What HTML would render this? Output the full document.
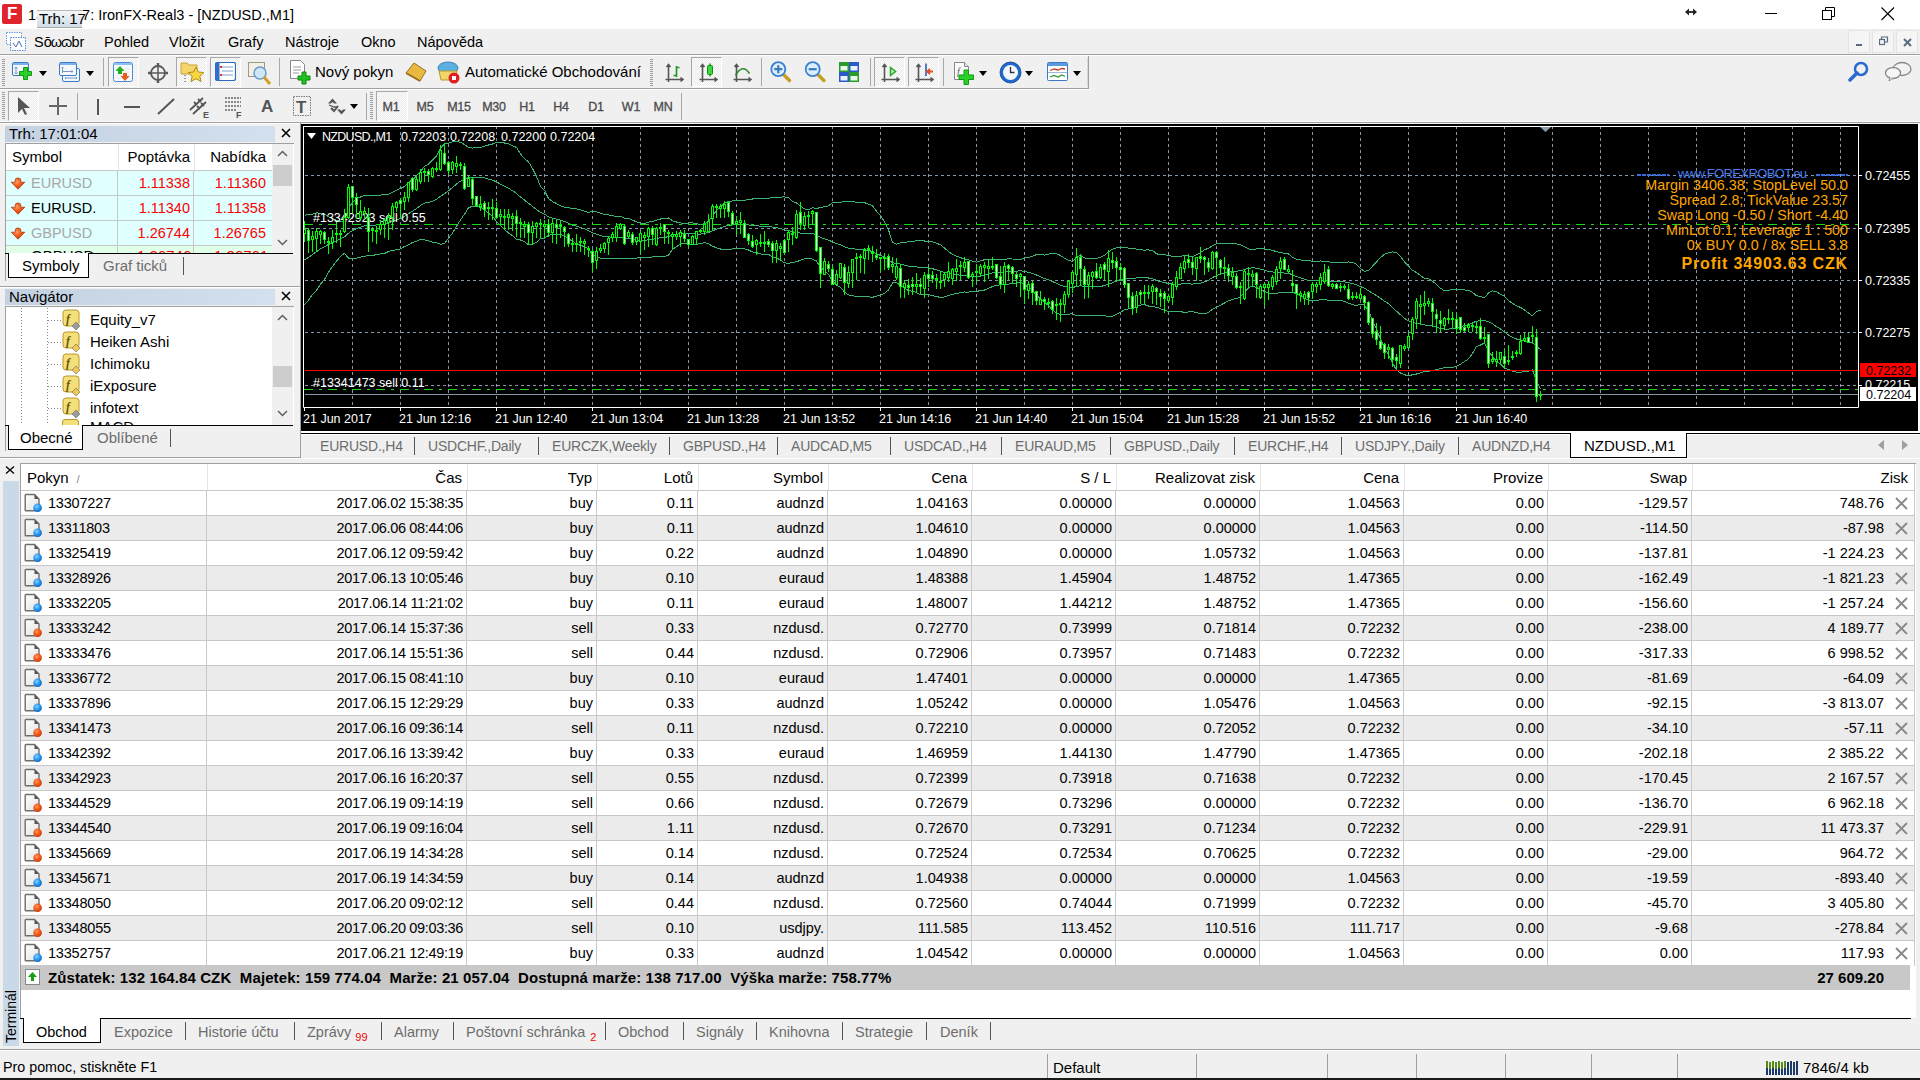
<!DOCTYPE html><html><head><meta charset="utf-8"><style>
*{margin:0;padding:0;box-sizing:border-box}
html,body{width:1920px;height:1080px;overflow:hidden;background:#f0f0f0;font-family:"Liberation Sans",sans-serif;font-size:14px;color:#000}
.a{position:absolute;white-space:nowrap}
.hl{position:absolute;height:1px}
.vl{position:absolute;width:1px}
</style></head><body>
<svg width="0" height="0" style="position:absolute"><defs>
<linearGradient id="gdoc" x1="0" y1="0" x2="1" y2="1"><stop offset="0" stop-color="#fff"/><stop offset="1" stop-color="#e2e2e2"/></linearGradient>
<radialGradient id="gred" cx="0.4" cy="0.35" r="0.7"><stop offset="0" stop-color="#ff9a60"/><stop offset="0.5" stop-color="#f05a1a"/><stop offset="1" stop-color="#c83a08"/></radialGradient>
<radialGradient id="gblue" cx="0.4" cy="0.35" r="0.7"><stop offset="0" stop-color="#8ad0ff"/><stop offset="0.5" stop-color="#2a98f0"/><stop offset="1" stop-color="#0a60c0"/></radialGradient>
</defs></svg>
<div class="a" style="left:0px;top:0px;width:1920px;height:29px;background:#fff"></div><div class="a" style="left:2px;top:4px;width:20px;height:20px;background:#e0242c;border-radius:2px"></div><div class="a" style="left:7px;top:4px;color:#fff;font-weight:bold;font-size:17px;line-height:20px">F</div><div class="a" style="left:28px;top:5px;font-size:14.5px;line-height:20px">13</div><div class="a" style="left:74px;top:5px;font-size:14.5px;line-height:20px">97: IronFX-Real3 - [NZDUSD.,M1]</div><div class="a" style="left:37px;top:10px;width:45px;height:18px;background:linear-gradient(#f4f7fa,#cfdbe6);border-top:1px solid #b8b8b8;border-bottom:1px solid #a8a8a8"></div><div class="a" style="left:39px;top:9px;font-size:15px;line-height:20px">Trh: 17</div><svg class="a" style="left:1685px;top:8px" width="12" height="8"><path d="M1 4h10" stroke="#222" stroke-width="1.8"/><path d="M0 4l4-3.5v7zM12 4l-4-3.5v7z" fill="#222"/></svg><div class="a" style="left:1765px;top:13px;width:12px;height:1px;background:#000"></div><svg class="a" style="left:1822px;top:7px" width="14" height="14"><rect x="0.5" y="3.5" width="9" height="9" fill="none" stroke="#000"/><path d="M3.5 3.5V0.5H12.5V9.5H9.5" fill="none" stroke="#000"/></svg><svg class="a" style="left:1881px;top:7px" width="14" height="14"><path d="M0.5 0.5L13 13M13 0.5L0.5 13" stroke="#000" stroke-width="1.1"/></svg><div class="a" style="left:0px;top:29px;width:1920px;height:25px;background:#f0f0f0"></div><div class="a" style="left:0px;top:54px;width:1920px;height:1px;background:#a0a0a0"></div><div class="a" style="left:0px;top:55px;width:1920px;height:1px;background:#fff"></div><svg class="a" style="left:5px;top:31px" width="22" height="21"><rect x="1.5" y="1.5" width="15" height="12" fill="#fff" stroke="#6a9ad8" stroke-dasharray="1.5 1"/><rect x="5.5" y="6.5" width="15" height="13" fill="#fff" stroke="#4d88d8" stroke-dasharray="1.5 1"/><path d="M8 12l3 4 3-6 3 6" fill="none" stroke="#4a6fa5"/></svg><div class="a" style="left:34px;top:32px;font-size:14.5px;line-height:20px">S<span style="letter-spacing:-1px">ōωɷ</span>br</div><div class="a" style="left:104px;top:32px;font-size:14.5px;line-height:20px">Pohled</div><div class="a" style="left:169px;top:32px;font-size:14.5px;line-height:20px">Vložit</div><div class="a" style="left:228px;top:32px;font-size:14.5px;line-height:20px">Grafy</div><div class="a" style="left:285px;top:32px;font-size:14.5px;line-height:20px">Nástroje</div><div class="a" style="left:361px;top:32px;font-size:14.5px;line-height:20px">Okno</div><div class="a" style="left:417px;top:32px;font-size:14.5px;line-height:20px">Nápověda</div><div class="a" style="left:1848px;top:30px;width:22px;height:23px;background:#f5f5f5;border:1px solid #e4e4e4"></div><div class="a" style="left:1872px;top:30px;width:22px;height:23px;background:#f5f5f5;border:1px solid #e4e4e4"></div><div class="a" style="left:1896px;top:30px;width:22px;height:23px;background:#f5f5f5;border:1px solid #e4e4e4"></div><div class="a" style="left:1856px;top:44px;width:6px;height:2px;background:#5a6a80"></div><svg class="a" style="left:1879px;top:36px" width="10" height="10"><rect x="0.5" y="3.5" width="5" height="5" fill="none" stroke="#5a6a80" stroke-width="1.2"/><path d="M2.5 3.5V1H8.5V6H6" fill="none" stroke="#5a6a80" stroke-width="1.2"/></svg><svg class="a" style="left:1903px;top:38px" width="9" height="9"><path d="M1 1L8 8M8 1L1 8" stroke="#5a6a80" stroke-width="2"/></svg><div class="a" style="left:0px;top:88px;width:1088px;height:1px;background:#a0a0a0"></div><div class="a" style="left:0px;top:89px;width:1089px;height:1px;background:#fff"></div><div class="a" style="left:1088px;top:56px;width:1px;height:33px;background:#a0a0a0"></div><div class="a" style="left:0px;top:121px;width:1920px;height:1px;background:#fafafa"></div><div class="a" style="left:0px;top:122px;width:1920px;height:1px;background:#a0a0a0"></div><div class="a" style="left:0px;top:123px;width:300px;height:1px;background:#fff"></div><svg class="a" style="left:2px;top:59px" width="3" height="27" viewBox="0 0 3 27"><rect x="0" y="0" width="3" height="1" fill="#a0a0a0"/><rect x="0" y="2" width="3" height="1" fill="#a0a0a0"/><rect x="0" y="4" width="3" height="1" fill="#a0a0a0"/><rect x="0" y="6" width="3" height="1" fill="#a0a0a0"/><rect x="0" y="8" width="3" height="1" fill="#a0a0a0"/><rect x="0" y="10" width="3" height="1" fill="#a0a0a0"/><rect x="0" y="12" width="3" height="1" fill="#a0a0a0"/><rect x="0" y="14" width="3" height="1" fill="#a0a0a0"/><rect x="0" y="16" width="3" height="1" fill="#a0a0a0"/><rect x="0" y="18" width="3" height="1" fill="#a0a0a0"/><rect x="0" y="20" width="3" height="1" fill="#a0a0a0"/><rect x="0" y="22" width="3" height="1" fill="#a0a0a0"/><rect x="0" y="24" width="3" height="1" fill="#a0a0a0"/><rect x="0" y="26" width="3" height="1" fill="#a0a0a0"/></svg><svg class="a" style="left:11px;top:61px" width="24" height="22" viewBox="0 0 24 22"><rect x="1.5" y="1.5" width="16" height="13" rx="1.5" fill="#f4f8fc" stroke="#3a7ac8"/><rect x="2" y="2" width="15" height="2" fill="#7fb4ea"/><path d="M5 6v7M3.5 7.5L5 6l1.5 1.5M3.5 11.5L5 13l1.5-1.5" stroke="#7a98b8" fill="none"/><path d="M12.5 6.5h4v4h4v4h-4v4h-4v-4h-4v-4h4z" fill="#2ad02a" stroke="#119911"/></svg><svg class="a" style="left:39px;top:71px" width="8" height="5" viewBox="0 0 8 5"><path d="M0 0H8L4 5z" fill="#000"/></svg><svg class="a" style="left:59px;top:61px" width="24" height="23" viewBox="0 0 24 23"><rect x="3.5" y="7.5" width="17" height="13" rx="1.5" fill="#f4f8fc" stroke="#3a7ac8"/><rect x="0.5" y="1.5" width="17" height="13" rx="1.5" fill="#f4f8fc" stroke="#3a7ac8"/><rect x="1" y="2" width="16" height="2" fill="#7fb4ea"/><path d="M3.5 6v6M2.5 7l1-1 1 1M3 10.5h11M12.5 9.5l1.5 1-1.5 1M6 17h12M7 16l-1 1 1 1M17 16l1 1-1 1" stroke="#7a98b8" fill="none"/></svg><svg class="a" style="left:86px;top:71px" width="8" height="5" viewBox="0 0 8 5"><path d="M0 0H8L4 5z" fill="#000"/></svg><div class="a" style="left:103px;top:58px;width:1px;height:28px;background:#a8a8a8"></div><div class="a" style="left:108px;top:57px;width:31px;height:30px;background:repeating-conic-gradient(#fbfbfb 0 25%,#ececec 0 50%) 0 0/2px 2px;border:1px solid #a8a8a8;border-right-color:#fff;border-bottom-color:#fff"></div><svg class="a" style="left:113px;top:62px" width="21" height="21" viewBox="0 0 21 21"><rect x="0.5" y="0.5" width="19" height="19" rx="2" fill="#f8fbfe" stroke="#4a8ad8"/><rect x="1" y="1" width="18" height="2" fill="#8fc0f0"/><path d="M4 7h13M4 10h13M4 13h13M4 16h13" stroke="#e4e4e4"/><path d="M7 4l-4.5 5h2.5v3h4v-3h2.5z" fill="#22b022"/><path d="M12 19l4.5-5h-2.5v-3h-4v3H7.5z" fill="#e85a20"/></svg><svg class="a" style="left:147px;top:62px" width="22" height="22" viewBox="0 0 22 22"><circle cx="11" cy="11" r="7" fill="none" stroke="#5a5a5a" stroke-width="1.8"/><path d="M11 2v18M2 11h18" stroke="#5a5a5a" stroke-width="1.5"/><path d="M11 1v3M11 18v3M1 11h3M18 11h3" stroke="#5a5a5a" stroke-width="2.5"/></svg><div class="a" style="left:176px;top:57px;width:31px;height:30px;background:repeating-conic-gradient(#fbfbfb 0 25%,#ececec 0 50%) 0 0/2px 2px;border:1px solid #a8a8a8;border-right-color:#fff;border-bottom-color:#fff"></div><svg class="a" style="left:179px;top:59px" width="26" height="26" viewBox="0 0 26 26"><path d="M2 4h6l2 2h8v9H2z" fill="#f3d56a" stroke="#c9a43a"/><path d="M17 8l2.4 5 5.4.6-4 3.6 1.2 5.3-5-2.8-5 2.8 1.2-5.3-4-3.6 5.4-.6z" fill="#f8d640" stroke="#b08a20"/><path d="M6 16v8" stroke="#444" stroke-dasharray="1 2"/></svg><div class="a" style="left:210px;top:57px;width:31px;height:30px;background:repeating-conic-gradient(#fbfbfb 0 25%,#ececec 0 50%) 0 0/2px 2px;border:1px solid #a8a8a8;border-right-color:#fff;border-bottom-color:#fff"></div><svg class="a" style="left:215px;top:62px" width="21" height="20" viewBox="0 0 21 20"><rect x="0.5" y="0.5" width="20" height="18" rx="2" fill="#fff" stroke="#2a6ac0" stroke-width="1.2"/><rect x="0.5" y="0.5" width="4" height="18" fill="#3070c8"/><path d="M7 5h11M7 9h11M7 13h11" stroke="#7aa0d0"/><rect x="5" y="4" width="2" height="2" fill="#e03030"/><rect x="5" y="12" width="2" height="2" fill="#e03030"/></svg><svg class="a" style="left:248px;top:62px" width="24" height="24" viewBox="0 0 24 24"><rect x="0.5" y="0.5" width="16" height="14" fill="#f2efe6" stroke="#a09880"/><circle cx="12" cy="11" r="6" fill="#cfe6f6" stroke="#6a9ac8" stroke-width="1.5"/><path d="M16 15l6 7" stroke="#d0a020" stroke-width="3"/></svg><div class="a" style="left:279px;top:58px;width:1px;height:28px;background:#a8a8a8"></div><svg class="a" style="left:289px;top:59px" width="24" height="26" viewBox="0 0 24 26"><path d="M1.5 1.5h10l4 4v14h-14z" fill="#fff" stroke="#888"/><path d="M4 8h8M4 11h8M4 14h6" stroke="#999"/><path d="M13 13h4v4h4v4h-4v4h-4v-4H9v-4h4z" fill="#22c022" stroke="#0a8a0a"/></svg><div class="a" style="left:315px;top:62px;font-size:15px;line-height:20px">Nový pokyn</div><svg class="a" style="left:404px;top:61px" width="23" height="21" viewBox="0 0 23 21"><path d="M2 12L10 2l12 8-6 10z" fill="#e8b840" stroke="#9a7020"/><path d="M2 12l14 8" stroke="#9a7020" stroke-width="2"/></svg><svg class="a" style="left:437px;top:59px" width="24" height="26" viewBox="0 0 24 26"><ellipse cx="11" cy="9" rx="10" ry="6" fill="#5ab0e0" stroke="#3a80b0"/><path d="M2 12h18l-2 9H4z" fill="#f3d56a" stroke="#b8962a"/><circle cx="17" cy="19" r="5.5" fill="#e02020"/><rect x="15" y="17" width="4" height="4" fill="#fff"/></svg><div class="a" style="left:465px;top:62px;font-size:15px;line-height:20px">Automatické Obchodování</div><svg class="a" style="left:650px;top:59px" width="3" height="27" viewBox="0 0 3 27"><rect x="0" y="0" width="3" height="1" fill="#a0a0a0"/><rect x="0" y="2" width="3" height="1" fill="#a0a0a0"/><rect x="0" y="4" width="3" height="1" fill="#a0a0a0"/><rect x="0" y="6" width="3" height="1" fill="#a0a0a0"/><rect x="0" y="8" width="3" height="1" fill="#a0a0a0"/><rect x="0" y="10" width="3" height="1" fill="#a0a0a0"/><rect x="0" y="12" width="3" height="1" fill="#a0a0a0"/><rect x="0" y="14" width="3" height="1" fill="#a0a0a0"/><rect x="0" y="16" width="3" height="1" fill="#a0a0a0"/><rect x="0" y="18" width="3" height="1" fill="#a0a0a0"/><rect x="0" y="20" width="3" height="1" fill="#a0a0a0"/><rect x="0" y="22" width="3" height="1" fill="#a0a0a0"/><rect x="0" y="24" width="3" height="1" fill="#a0a0a0"/><rect x="0" y="26" width="3" height="1" fill="#a0a0a0"/></svg><svg class="a" style="left:660px;top:60px" width="26" height="26" viewBox="0 0 26 26"><path d="M8.5 22V4.5M6.5 7L8.5 4.5 10.5 7M5.5 19.5H23M20.5 17.5L23 19.5 20.5 21.5" stroke="#555" fill="none" stroke-width="1.6"/><path d="M16.5 6V17M16.5 7.5H19.5M13.5 15.5H16.5" stroke="#1a9a1a" stroke-width="1.6" fill="none"/></svg><div class="a" style="left:691px;top:57px;width:31px;height:30px;background:repeating-conic-gradient(#fbfbfb 0 25%,#ececec 0 50%) 0 0/2px 2px;border:1px solid #a8a8a8;border-right-color:#fff;border-bottom-color:#fff"></div><svg class="a" style="left:694px;top:60px" width="26" height="26" viewBox="0 0 26 26"><path d="M8.5 22V4.5M6.5 7L8.5 4.5 10.5 7M5.5 19.5H23M20.5 17.5L23 19.5 20.5 21.5" stroke="#555" fill="none" stroke-width="1.6"/><path d="M16 3.5V16.5" stroke="#129012" stroke-width="1.5"/><rect x="13.5" y="5.5" width="5" height="9" rx="1" fill="#3ad83a" stroke="#129012"/></svg><svg class="a" style="left:728px;top:60px" width="26" height="26" viewBox="0 0 26 26"><path d="M8.5 22V4.5M6.5 7L8.5 4.5 10.5 7M5.5 19.5H23M20.5 17.5L23 19.5 20.5 21.5" stroke="#555" fill="none" stroke-width="1.6"/><path d="M7.5 15.5Q14.5 3 21.5 13.5" stroke="#2a8a2a" stroke-width="1.6" fill="none"/></svg><div class="a" style="left:761px;top:58px;width:1px;height:28px;background:#a8a8a8"></div><svg class="a" style="left:768px;top:60px" width="26" height="26" viewBox="0 0 26 26"><path d="M15 14l6.5 6.5" stroke="#c8a020" stroke-width="3.5" stroke-linecap="round"/><circle cx="10.3" cy="9.2" r="7" fill="#dcefff" stroke="#3a80d0" stroke-width="1.8"/><path d="M6.3 9.2h8M10.3 5.2v8" stroke="#3a7ab8" stroke-width="2.2"/></svg><svg class="a" style="left:802px;top:60px" width="26" height="26" viewBox="0 0 26 26"><path d="M15.4 14l6.5 6.5" stroke="#c8a020" stroke-width="3.5" stroke-linecap="round"/><circle cx="10.7" cy="9.2" r="7" fill="#dcefff" stroke="#3a80d0" stroke-width="1.8"/><path d="M6.7 9.2h8" stroke="#3a7ab8" stroke-width="2.2"/></svg><svg class="a" style="left:839px;top:62px" width="20" height="20" viewBox="0 0 20 20"><rect x="0" y="0" width="10" height="10" fill="#2a9a2a"/><rect x="10" y="0" width="10" height="10" fill="#2a5ac8"/><rect x="0" y="10" width="10" height="10" fill="#2a5ac8"/><rect x="10" y="10" width="10" height="10" fill="#2a9a2a"/><rect x="1.5" y="4" width="7" height="4.5" fill="#e8f8e8"/><rect x="11.5" y="4" width="7" height="4.5" fill="#e8f0ff"/><rect x="1.5" y="14" width="7" height="4.5" fill="#e8f0ff"/><rect x="11.5" y="14" width="7" height="4.5" fill="#e8f8e8"/></svg><div class="a" style="left:870px;top:58px;width:1px;height:28px;background:#a8a8a8"></div><div class="a" style="left:874px;top:57px;width:31px;height:30px;background:repeating-conic-gradient(#fbfbfb 0 25%,#ececec 0 50%) 0 0/2px 2px;border:1px solid #a8a8a8;border-right-color:#fff;border-bottom-color:#fff"></div><svg class="a" style="left:876px;top:60px" width="26" height="26" viewBox="0 0 26 26"><path d="M8.5 22V4.5M6.5 7L8.5 4.5 10.5 7M5.5 19.5H23M20.5 17.5L23 19.5 20.5 21.5" stroke="#555" fill="none" stroke-width="1.6"/><path d="M14.5 7.5v8l5-4z" fill="#bff0bf" stroke="#22aa22" stroke-width="1.5"/></svg><div class="a" style="left:908px;top:57px;width:31px;height:30px;background:repeating-conic-gradient(#fbfbfb 0 25%,#ececec 0 50%) 0 0/2px 2px;border:1px solid #a8a8a8;border-right-color:#fff;border-bottom-color:#fff"></div><svg class="a" style="left:910px;top:60px" width="26" height="26" viewBox="0 0 26 26"><path d="M8.5 22V4.5M6.5 7L8.5 4.5 10.5 7M5.5 19.5H23M20.5 17.5L23 19.5 20.5 21.5" stroke="#555" fill="none" stroke-width="1.6"/><path d="M16 3.5V16" stroke="#1a5ab8" stroke-width="1.5"/><path d="M17 11.5h6M20 9l-3 2.5 3 2.5" stroke="#e05020" stroke-width="1.8" fill="none"/></svg><div class="a" style="left:943px;top:58px;width:1px;height:28px;background:#a8a8a8"></div><svg class="a" style="left:953px;top:61px" width="24" height="25" viewBox="0 0 24 25"><path d="M1.5 1.5h10l4 4v13h-14z" fill="#fafafa" stroke="#888"/><path d="M11.5 1.5v4h4" fill="#e8e8e8" stroke="#888"/><text x="4" y="14" font-size="10" font-style="italic" fill="#555" font-family="Liberation Serif">f</text><path d="M11 9h4.5v5h5v4.5h-5v5H11v-5H6v-4.5h5z" fill="#2ad02a" stroke="#119911"/></svg><svg class="a" style="left:979px;top:71px" width="8" height="5" viewBox="0 0 8 5"><path d="M0 0H8L4 5z" fill="#000"/></svg><svg class="a" style="left:999px;top:61px" width="23" height="23" viewBox="0 0 23 23"><circle cx="11.5" cy="11.5" r="10.5" fill="#1f6ad0"/><circle cx="11.5" cy="11.5" r="10.5" fill="none" stroke="#0e3f8a" stroke-width="0.8"/><circle cx="11.5" cy="11.5" r="7.5" fill="#f4f8fc"/><path d="M11.5 6v5.5h4" stroke="#333" stroke-width="1.3" fill="none"/></svg><svg class="a" style="left:1025px;top:71px" width="8" height="5" viewBox="0 0 8 5"><path d="M0 0H8L4 5z" fill="#000"/></svg><svg class="a" style="left:1047px;top:62px" width="21" height="19" viewBox="0 0 21 19"><rect x="0.5" y="0.5" width="20" height="18" rx="1" fill="#fff" stroke="#3a7ac8"/><rect x="1" y="1" width="19" height="3" fill="#5a9be0"/><path d="M1 10.5h19" stroke="#9ab8d8"/><path d="M3 8.5l4-1.5 4 1 4-1.5 3 .5" stroke="#c84020" stroke-width="1.3" fill="none"/><path d="M3 15l4-1.5 4 1.5 4-2 3 1.5" stroke="#2a9a2a" stroke-width="1.3" fill="none"/></svg><svg class="a" style="left:1073px;top:71px" width="8" height="5" viewBox="0 0 8 5"><path d="M0 0H8L4 5z" fill="#000"/></svg><div class="a" style="left:1087px;top:58px;width:1px;height:29px;background:#d8d8d8"></div><svg class="a" style="left:1848px;top:61px" width="22" height="21" viewBox="0 0 22 21"><circle cx="13" cy="8" r="6" fill="none" stroke="#2a6ad0" stroke-width="2.5"/><path d="M9 12l-7 7" stroke="#2a6ad0" stroke-width="3.5" stroke-linecap="round"/></svg><svg class="a" style="left:1884px;top:61px" width="28" height="21" viewBox="0 0 28 21"><ellipse cx="18" cy="8" rx="9" ry="6.5" fill="#f2f2f2" stroke="#8a8a8a" stroke-width="1.3"/><ellipse cx="9" cy="12" rx="7.5" ry="5.5" fill="#f7f7f7" stroke="#8a8a8a" stroke-width="1.3"/><path d="M6 16l-1 4 4-3" fill="#f7f7f7" stroke="#8a8a8a"/></svg><svg class="a" style="left:2px;top:92px" width="3" height="28" viewBox="0 0 3 28"><rect x="0" y="0" width="3" height="1" fill="#a0a0a0"/><rect x="0" y="2" width="3" height="1" fill="#a0a0a0"/><rect x="0" y="4" width="3" height="1" fill="#a0a0a0"/><rect x="0" y="6" width="3" height="1" fill="#a0a0a0"/><rect x="0" y="8" width="3" height="1" fill="#a0a0a0"/><rect x="0" y="10" width="3" height="1" fill="#a0a0a0"/><rect x="0" y="12" width="3" height="1" fill="#a0a0a0"/><rect x="0" y="14" width="3" height="1" fill="#a0a0a0"/><rect x="0" y="16" width="3" height="1" fill="#a0a0a0"/><rect x="0" y="18" width="3" height="1" fill="#a0a0a0"/><rect x="0" y="20" width="3" height="1" fill="#a0a0a0"/><rect x="0" y="22" width="3" height="1" fill="#a0a0a0"/><rect x="0" y="24" width="3" height="1" fill="#a0a0a0"/><rect x="0" y="26" width="3" height="1" fill="#a0a0a0"/></svg><div class="a" style="left:8px;top:91px;width:31px;height:30px;background:repeating-conic-gradient(#fbfbfb 0 25%,#ececec 0 50%) 0 0/2px 2px;border:1px solid #a8a8a8;border-right-color:#fff;border-bottom-color:#fff"></div><svg class="a" style="left:17px;top:96px" width="14" height="20" viewBox="0 0 14 20"><path d="M1 1v16l4-4 3 6 2-1-3-6h6z" fill="#555"/></svg><svg class="a" style="left:48px;top:96px" width="20" height="20" viewBox="0 0 20 20"><path d="M10 1v18M1 10h18" stroke="#666" stroke-width="2"/></svg><div class="a" style="left:77px;top:93px;width:1px;height:27px;background:#a8a8a8"></div><div class="a" style="left:97px;top:99px;width:2px;height:16px;background:#555"></div><div class="a" style="left:124px;top:106px;width:16px;height:2px;background:#555"></div><svg class="a" style="left:157px;top:98px" width="18" height="17" viewBox="0 0 18 17"><path d="M1 16L17 1" stroke="#555" stroke-width="2"/></svg><svg class="a" style="left:189px;top:96px" width="22" height="22" viewBox="0 0 22 22"><path d="M1 14L14 2M4 18L17 6M5 6l3 3M9 3l3 3M8 10l3 3M12 7l3 3" stroke="#555" stroke-width="1.8"/><text x="14" y="22" font-size="9" font-weight="bold" fill="#555" font-family="Liberation Sans">E</text></svg><svg class="a" style="left:224px;top:96px" width="20" height="22" viewBox="0 0 20 22"><path d="M1 2h16M1 6h16M1 10h16M1 14h12" stroke="#666" stroke-width="1.5" stroke-dasharray="2 1"/><text x="12" y="22" font-size="9" font-weight="bold" fill="#555" font-family="Liberation Sans">F</text></svg><div class="a" style="left:261px;top:97px;font-size:17px;font-weight:bold;color:#555;line-height:20px">A</div><svg class="a" style="left:293px;top:96px" width="18" height="20" viewBox="0 0 18 20"><rect x="0.5" y="0.5" width="17" height="19" fill="none" stroke="#777" stroke-dasharray="1.5 1"/><text x="3" y="17" font-size="17" font-weight="bold" fill="#555" font-family="Liberation Sans">T</text></svg><svg class="a" style="left:326px;top:97px" width="22" height="20" viewBox="0 0 22 20"><path d="M2 6.5L6.5 1.5 11 6.5 8 6.5 6.5 5 5 6.5z" fill="#555"/><path d="M3 8l5 2 3 0" stroke="#555" stroke-width="1.3" fill="none"/><path d="M5 11l3 3 4-5" stroke="#555" stroke-width="2" fill="none"/><path d="M11 12.5L15.5 17.5 20 12.5 17 12.5 15.5 14 14 12.5z" fill="#555"/></svg><svg class="a" style="left:350px;top:104px" width="8" height="5" viewBox="0 0 8 5"><path d="M0 0H8L4 5z" fill="#000"/></svg><div class="a" style="left:366px;top:93px;width:1px;height:27px;background:#a8a8a8"></div><svg class="a" style="left:370px;top:92px" width="3" height="28" viewBox="0 0 3 28"><rect x="0" y="0" width="3" height="1" fill="#a0a0a0"/><rect x="0" y="2" width="3" height="1" fill="#a0a0a0"/><rect x="0" y="4" width="3" height="1" fill="#a0a0a0"/><rect x="0" y="6" width="3" height="1" fill="#a0a0a0"/><rect x="0" y="8" width="3" height="1" fill="#a0a0a0"/><rect x="0" y="10" width="3" height="1" fill="#a0a0a0"/><rect x="0" y="12" width="3" height="1" fill="#a0a0a0"/><rect x="0" y="14" width="3" height="1" fill="#a0a0a0"/><rect x="0" y="16" width="3" height="1" fill="#a0a0a0"/><rect x="0" y="18" width="3" height="1" fill="#a0a0a0"/><rect x="0" y="20" width="3" height="1" fill="#a0a0a0"/><rect x="0" y="22" width="3" height="1" fill="#a0a0a0"/><rect x="0" y="24" width="3" height="1" fill="#a0a0a0"/><rect x="0" y="26" width="3" height="1" fill="#a0a0a0"/></svg><div class="a" style="left:376px;top:91px;width:32px;height:30px;background:repeating-conic-gradient(#fbfbfb 0 25%,#ececec 0 50%) 0 0/2px 2px;border:1px solid #a8a8a8;border-right-color:#fff;border-bottom-color:#fff"></div><div class="a" style="left:371px;width:40px;top:99px;text-align:center;font-size:12.5px;line-height:16px;color:#4a4a4a;-webkit-text-stroke:0.3px #4a4a4a;letter-spacing:-0.2px">M1</div><div class="a" style="left:405px;width:40px;top:99px;text-align:center;font-size:12.5px;line-height:16px;color:#4a4a4a;-webkit-text-stroke:0.3px #4a4a4a;letter-spacing:-0.2px">M5</div><div class="a" style="left:439px;width:40px;top:99px;text-align:center;font-size:12.5px;line-height:16px;color:#4a4a4a;-webkit-text-stroke:0.3px #4a4a4a;letter-spacing:-0.2px">M15</div><div class="a" style="left:474px;width:40px;top:99px;text-align:center;font-size:12.5px;line-height:16px;color:#4a4a4a;-webkit-text-stroke:0.3px #4a4a4a;letter-spacing:-0.2px">M30</div><div class="a" style="left:507px;width:40px;top:99px;text-align:center;font-size:12.5px;line-height:16px;color:#4a4a4a;-webkit-text-stroke:0.3px #4a4a4a;letter-spacing:-0.2px">H1</div><div class="a" style="left:541px;width:40px;top:99px;text-align:center;font-size:12.5px;line-height:16px;color:#4a4a4a;-webkit-text-stroke:0.3px #4a4a4a;letter-spacing:-0.2px">H4</div><div class="a" style="left:576px;width:40px;top:99px;text-align:center;font-size:12.5px;line-height:16px;color:#4a4a4a;-webkit-text-stroke:0.3px #4a4a4a;letter-spacing:-0.2px">D1</div><div class="a" style="left:611px;width:40px;top:99px;text-align:center;font-size:12.5px;line-height:16px;color:#4a4a4a;-webkit-text-stroke:0.3px #4a4a4a;letter-spacing:-0.2px">W1</div><div class="a" style="left:643px;width:40px;top:99px;text-align:center;font-size:12.5px;line-height:16px;color:#4a4a4a;-webkit-text-stroke:0.3px #4a4a4a;letter-spacing:-0.2px">MN</div><div class="a" style="left:681px;top:93px;width:1px;height:27px;background:#a8a8a8"></div><div class="a" style="left:0px;top:124px;width:300px;height:334px;background:#f0f0f0"></div><div class="a" style="left:300px;top:123px;width:1px;height:335px;background:#a0a0a0"></div><div class="a" style="left:5px;top:126px;width:270px;height:16px;background:linear-gradient(90deg,#c3d1e1,#d3e0ee)"></div><div class="a" style="left:9px;top:125px;font-size:15px;line-height:18px">Trh: 17:01:04</div><svg class="a" style="left:281px;top:128px" width="10" height="10" viewBox="0 0 10 10"><path d="M1 1L9 9M9 1L1 9" stroke="#000" stroke-width="1.6"/></svg><div class="a" style="left:5px;top:143px;width:289px;height:111px;background:#fff;border-top:1px solid #a0a0a0;border-left:1px solid #a0a0a0"></div><div class="a" style="left:6px;top:144px;width:266px;height:26px;background:#fff"></div><div class="a" style="left:12px;top:148px;font-size:15px;line-height:18px">Symbol</div><div class="a" style="right:1730px;top:148px;font-size:15px;line-height:18px">Poptávka</div><div class="a" style="right:1654px;top:148px;font-size:15px;line-height:18px">Nabídka</div><div class="a" style="left:118px;top:144px;width:1px;height:26px;background:#e4e4e4"></div><div class="a" style="left:194px;top:144px;width:1px;height:26px;background:#e4e4e4"></div><div class="a" style="left:6px;top:170px;width:266px;height:25px;background:#e0ffff"></div><div class="a" style="left:6px;top:170px;width:266px;height:1px;background:#c8c8c8"></div><svg class="a" style="left:11px;top:177px" width="14" height="13" viewBox="0 0 14 13"><path d="M4.2 3Q4.2 1 7 1T9.8 3V5.2h4L7 12.2 0.2 5.2h4z" fill="url(#gred)" stroke="#a83008" stroke-width="0.7"/></svg><div class="a" style="left:31px;top:174px;font-size:14.5px;line-height:18px;color:#a8a8a8">EURUSD</div><div class="a" style="right:1730px;top:174px;font-size:14.5px;line-height:18px;color:#f00">1.11338</div><div class="a" style="right:1654px;top:174px;font-size:14.5px;line-height:18px;color:#f00">1.11360</div><div class="a" style="left:117px;top:170px;width:1px;height:25px;background:#c8c8c8"></div><div class="a" style="left:193px;top:170px;width:1px;height:25px;background:#c8c8c8"></div><div class="a" style="left:6px;top:195px;width:266px;height:25px;background:#e0ffff"></div><div class="a" style="left:6px;top:195px;width:266px;height:1px;background:#c8c8c8"></div><svg class="a" style="left:11px;top:202px" width="14" height="13" viewBox="0 0 14 13"><path d="M4.2 3Q4.2 1 7 1T9.8 3V5.2h4L7 12.2 0.2 5.2h4z" fill="url(#gred)" stroke="#a83008" stroke-width="0.7"/></svg><div class="a" style="left:31px;top:199px;font-size:14.5px;line-height:18px;color:#000">EURUSD.</div><div class="a" style="right:1730px;top:199px;font-size:14.5px;line-height:18px;color:#f00">1.11340</div><div class="a" style="right:1654px;top:199px;font-size:14.5px;line-height:18px;color:#f00">1.11358</div><div class="a" style="left:117px;top:195px;width:1px;height:25px;background:#c8c8c8"></div><div class="a" style="left:193px;top:195px;width:1px;height:25px;background:#c8c8c8"></div><div class="a" style="left:6px;top:220px;width:266px;height:25px;background:#e0ffff"></div><div class="a" style="left:6px;top:220px;width:266px;height:1px;background:#c8c8c8"></div><svg class="a" style="left:11px;top:227px" width="14" height="13" viewBox="0 0 14 13"><path d="M4.2 3Q4.2 1 7 1T9.8 3V5.2h4L7 12.2 0.2 5.2h4z" fill="url(#gred)" stroke="#a83008" stroke-width="0.7"/></svg><div class="a" style="left:31px;top:224px;font-size:14.5px;line-height:18px;color:#a8a8a8">GBPUSD</div><div class="a" style="right:1730px;top:224px;font-size:14.5px;line-height:18px;color:#f00">1.26744</div><div class="a" style="right:1654px;top:224px;font-size:14.5px;line-height:18px;color:#f00">1.26765</div><div class="a" style="left:117px;top:220px;width:1px;height:25px;background:#c8c8c8"></div><div class="a" style="left:193px;top:220px;width:1px;height:25px;background:#c8c8c8"></div><div class="a" style="left:6px;top:245px;width:266px;height:9px;background:#e0ffe8;overflow:hidden"></div><div class="a" style="left:6px;top:245px;width:266px;height:1px;background:#c8c8c8"></div><div class="a" style="left:117px;top:245px;width:1px;height:9px;background:#c8c8c8"></div><div class="a" style="left:193px;top:245px;width:1px;height:9px;background:#c8c8c8"></div><div class="a" style="left:31px;top:245px;width:250px;height:8px;overflow:hidden"><div style="position:absolute;top:2px;left:0;font-size:15px;line-height:18px">GBPUSD.</div><div style="position:absolute;top:2px;left:106px;font-size:15px;line-height:18px;color:#f00">1.26746</div><div style="position:absolute;top:2px;left:183px;font-size:15px;line-height:18px;color:#f00">1.26761</div></div><div class="a" style="left:272px;top:144px;width:21px;height:110px;background:#f0f0f0"></div><svg class="a" style="left:277px;top:150px" width="11" height="7" viewBox="0 0 11 7"><path d="M1 6L5.5 1.5 10 6" stroke="#606060" stroke-width="1.5" fill="none"/></svg><div class="a" style="left:273px;top:165px;width:19px;height:21px;background:#cdcdcd"></div><svg class="a" style="left:277px;top:239px" width="11" height="7" viewBox="0 0 11 7"><path d="M1 1L5.5 5.5 10 1" stroke="#606060" stroke-width="1.5" fill="none"/></svg><div class="a" style="left:5px;top:253px;width:288px;height:1px;background:#000"></div><div class="a" style="left:8px;top:253px;width:81px;height:25px;background:#fff;border:1px solid #000;border-top:none"></div><div class="a" style="left:22px;top:257px;font-size:15px;line-height:18px">Symboly</div><div class="a" style="left:103px;top:257px;font-size:15px;line-height:18px;color:#6d6d6d">Graf ticků</div><div class="a" style="left:183px;top:257px;width:1px;height:18px;background:#555"></div><div class="a" style="left:5px;top:254px;width:1px;height:27px;background:#a0a0a0"></div><div class="a" style="left:0px;top:286px;width:300px;height:1px;background:#a0a0a0"></div><div class="a" style="left:0px;top:287px;width:300px;height:1px;background:#fff"></div><div class="a" style="left:5px;top:289px;width:270px;height:16px;background:linear-gradient(90deg,#c3d1e1,#d3e0ee)"></div><div class="a" style="left:9px;top:288px;font-size:15px;line-height:18px">Navigátor</div><svg class="a" style="left:281px;top:291px" width="10" height="10" viewBox="0 0 10 10"><path d="M1 1L9 9M9 1L1 9" stroke="#000" stroke-width="1.6"/></svg><div class="a" style="left:5px;top:306px;width:289px;height:119px;background:#fff;border-top:1px solid #a0a0a0;border-left:1px solid #a0a0a0"></div><svg class="a" style="left:20px;top:308px" width="30" height="117" viewBox="0 0 30 117"><path d="M1.5 0V117M27.5 0V117" stroke="#888" stroke-dasharray="1 2"/></svg><svg class="a" style="left:48px;top:320px" width="15" height="1" viewBox="0 0 15 1"><path d="M0 0.5H15" stroke="#888" stroke-dasharray="1 2"/></svg><svg class="a" style="left:62px;top:309px" width="20" height="21" viewBox="0 0 20 21"><rect x="1" y="1" width="16" height="16" rx="3" fill="#f5df78" stroke="#b89a30"/><text x="4" y="14" font-size="12" font-style="italic" font-weight="bold" fill="#6a5510" font-family="Liberation Serif">f</text><path d="M14 13l4 4-4 4-4-4z" fill="#9a9a9a" stroke="#777" stroke-width="0.7"/></svg><div class="a" style="left:90px;top:311px;font-size:15px;line-height:18px">Equity_v7</div><svg class="a" style="left:48px;top:342px" width="15" height="1" viewBox="0 0 15 1"><path d="M0 0.5H15" stroke="#888" stroke-dasharray="1 2"/></svg><svg class="a" style="left:62px;top:331px" width="20" height="21" viewBox="0 0 20 21"><rect x="1" y="1" width="16" height="16" rx="3" fill="#f5df78" stroke="#b89a30"/><text x="4" y="14" font-size="12" font-style="italic" font-weight="bold" fill="#6a5510" font-family="Liberation Serif">f</text><path d="M14 13l4 4-4 4-4-4z" fill="#f0c850" stroke="#777" stroke-width="0.7"/></svg><div class="a" style="left:90px;top:333px;font-size:15px;line-height:18px">Heiken Ashi</div><svg class="a" style="left:48px;top:364px" width="15" height="1" viewBox="0 0 15 1"><path d="M0 0.5H15" stroke="#888" stroke-dasharray="1 2"/></svg><svg class="a" style="left:62px;top:353px" width="20" height="21" viewBox="0 0 20 21"><rect x="1" y="1" width="16" height="16" rx="3" fill="#f5df78" stroke="#b89a30"/><text x="4" y="14" font-size="12" font-style="italic" font-weight="bold" fill="#6a5510" font-family="Liberation Serif">f</text><path d="M14 13l4 4-4 4-4-4z" fill="#f0c850" stroke="#777" stroke-width="0.7"/></svg><div class="a" style="left:90px;top:355px;font-size:15px;line-height:18px">Ichimoku</div><svg class="a" style="left:48px;top:386px" width="15" height="1" viewBox="0 0 15 1"><path d="M0 0.5H15" stroke="#888" stroke-dasharray="1 2"/></svg><svg class="a" style="left:62px;top:375px" width="20" height="21" viewBox="0 0 20 21"><rect x="1" y="1" width="16" height="16" rx="3" fill="#f5df78" stroke="#b89a30"/><text x="4" y="14" font-size="12" font-style="italic" font-weight="bold" fill="#6a5510" font-family="Liberation Serif">f</text><path d="M14 13l4 4-4 4-4-4z" fill="#f0c850" stroke="#777" stroke-width="0.7"/></svg><div class="a" style="left:90px;top:377px;font-size:15px;line-height:18px">iExposure</div><svg class="a" style="left:48px;top:408px" width="15" height="1" viewBox="0 0 15 1"><path d="M0 0.5H15" stroke="#888" stroke-dasharray="1 2"/></svg><svg class="a" style="left:62px;top:397px" width="20" height="21" viewBox="0 0 20 21"><rect x="1" y="1" width="16" height="16" rx="3" fill="#f5df78" stroke="#b89a30"/><text x="4" y="14" font-size="12" font-style="italic" font-weight="bold" fill="#6a5510" font-family="Liberation Serif">f</text><path d="M14 13l4 4-4 4-4-4z" fill="#9a9a9a" stroke="#777" stroke-width="0.7"/></svg><div class="a" style="left:90px;top:399px;font-size:15px;line-height:18px">infotext</div><div class="a" style="left:62px;top:419px;width:200px;height:6px;overflow:hidden"><div style="position:absolute;left:0;top:0;width:17px;height:12px;background:#f5df78;border:1px solid #b89a30;border-radius:3px"></div><div style="position:absolute;left:28px;top:-1px;font-size:15px;line-height:18px">MACD</div></div><div class="a" style="left:272px;top:307px;width:21px;height:118px;background:#f0f0f0"></div><svg class="a" style="left:277px;top:314px" width="11" height="7" viewBox="0 0 11 7"><path d="M1 6L5.5 1.5 10 6" stroke="#606060" stroke-width="1.5" fill="none"/></svg><div class="a" style="left:273px;top:366px;width:19px;height:21px;background:#cdcdcd"></div><svg class="a" style="left:277px;top:410px" width="11" height="7" viewBox="0 0 11 7"><path d="M1 1L5.5 5.5 10 1" stroke="#606060" stroke-width="1.5" fill="none"/></svg><div class="a" style="left:5px;top:425px;width:288px;height:1px;background:#000"></div><div class="a" style="left:8px;top:425px;width:75px;height:25px;background:#fff;border:1px solid #000;border-top:none"></div><div class="a" style="left:20px;top:429px;font-size:15px;line-height:18px">Obecné</div><div class="a" style="left:97px;top:429px;font-size:15px;line-height:18px;color:#6d6d6d">Oblíbené</div><div class="a" style="left:170px;top:429px;width:1px;height:18px;background:#555"></div><div class="a" style="left:5px;top:426px;width:1px;height:25px;background:#a0a0a0"></div><div class="a" style="left:0px;top:457px;width:1920px;height:1px;background:#a0a0a0"></div><div class="a" style="left:0px;top:458px;width:1920px;height:1px;background:#fff"></div><div class="a" style="left:301px;top:124px;width:1617px;height:307px;background:#000"></div><div class="a" style="left:1918px;top:123px;width:2px;height:308px;background:#fff"></div><svg class="a" style="left:0px;top:0px" width="1920" height="432" viewBox="0 0 1920 432"><path d="M352.5 126V407" stroke="#8797aa" stroke-dasharray="3 3"/><path d="M400.5 126V407" stroke="#8797aa" stroke-dasharray="3 3"/><path d="M448.5 126V407" stroke="#8797aa" stroke-dasharray="3 3"/><path d="M496.5 126V407" stroke="#8797aa" stroke-dasharray="3 3"/><path d="M544.5 126V407" stroke="#8797aa" stroke-dasharray="3 3"/><path d="M592.5 126V407" stroke="#8797aa" stroke-dasharray="3 3"/><path d="M640.5 126V407" stroke="#8797aa" stroke-dasharray="3 3"/><path d="M688.5 126V407" stroke="#8797aa" stroke-dasharray="3 3"/><path d="M736.5 126V407" stroke="#8797aa" stroke-dasharray="3 3"/><path d="M784.5 126V407" stroke="#8797aa" stroke-dasharray="3 3"/><path d="M832.5 126V407" stroke="#8797aa" stroke-dasharray="3 3"/><path d="M880.5 126V407" stroke="#8797aa" stroke-dasharray="3 3"/><path d="M928.5 126V407" stroke="#8797aa" stroke-dasharray="3 3"/><path d="M976.5 126V407" stroke="#8797aa" stroke-dasharray="3 3"/><path d="M1024.5 126V407" stroke="#8797aa" stroke-dasharray="3 3"/><path d="M1072.5 126V407" stroke="#8797aa" stroke-dasharray="3 3"/><path d="M1120.5 126V407" stroke="#8797aa" stroke-dasharray="3 3"/><path d="M1168.5 126V407" stroke="#8797aa" stroke-dasharray="3 3"/><path d="M1216.5 126V407" stroke="#8797aa" stroke-dasharray="3 3"/><path d="M1264.5 126V407" stroke="#8797aa" stroke-dasharray="3 3"/><path d="M1312.5 126V407" stroke="#8797aa" stroke-dasharray="3 3"/><path d="M1360.5 126V407" stroke="#8797aa" stroke-dasharray="3 3"/><path d="M1408.5 126V407" stroke="#8797aa" stroke-dasharray="3 3"/><path d="M1456.5 126V407" stroke="#8797aa" stroke-dasharray="3 3"/><path d="M1504.5 126V407" stroke="#8797aa" stroke-dasharray="3 3"/><path d="M1552.5 126V407" stroke="#8797aa" stroke-dasharray="3 3"/><path d="M1600.5 126V407" stroke="#8797aa" stroke-dasharray="3 3"/><path d="M1648.5 126V407" stroke="#8797aa" stroke-dasharray="3 3"/><path d="M1696.5 126V407" stroke="#8797aa" stroke-dasharray="3 3"/><path d="M1744.5 126V407" stroke="#8797aa" stroke-dasharray="3 3"/><path d="M1792.5 126V407" stroke="#8797aa" stroke-dasharray="3 3"/><path d="M1840.5 126V407" stroke="#8797aa" stroke-dasharray="3 3"/><path d="M305 175.5H1858" stroke="#8797aa" stroke-dasharray="3 3"/><path d="M305 228.5H1858" stroke="#8797aa" stroke-dasharray="3 3"/><path d="M305 280.5H1858" stroke="#8797aa" stroke-dasharray="3 3"/><path d="M305 332.5H1858" stroke="#8797aa" stroke-dasharray="3 3"/><path d="M305 385.5H1858" stroke="#8797aa" stroke-dasharray="3 3"/><polyline points="304.5,215.3 308.5,214.5 312.5,214.3 316.5,212.9 320.5,213.3 324.5,214.1 328.5,216.7 332.5,218.7 336.5,220.1 340.5,221.8 344.5,220.3 348.5,208.3 352.5,202.2 356.5,198.9 360.5,197.0 364.5,195.3 368.5,195.4 372.5,195.3 376.5,195.3 380.5,195.1 384.5,194.7 388.5,194.3 392.5,192.5 396.5,190.2 400.5,188.5 404.5,186.5 408.5,182.2 412.5,179.9 416.5,175.9 420.5,171.3 424.5,166.3 428.5,164.2 432.5,160.0 436.5,155.8 440.5,148.1 444.5,144.2 448.5,143.2 452.5,141.8 456.5,141.7 460.5,142.2 464.5,144.7 468.5,147.2 472.5,148.1 476.5,147.7 480.5,147.6 484.5,146.2 488.5,145.0 492.5,144.0 496.5,142.5 500.5,142.5 504.5,143.0 508.5,143.7 512.5,145.6 516.5,147.5 520.5,154.1 524.5,158.5 528.5,161.8 532.5,168.5 536.5,176.4 540.5,186.3 544.5,190.3 548.5,198.5 552.5,201.6 556.5,203.5 560.5,205.9 564.5,207.2 568.5,207.6 572.5,208.8 576.5,208.8 580.5,209.9 584.5,211.2 588.5,212.3 592.5,211.3 596.5,211.9 600.5,213.1 604.5,214.4 608.5,214.8 612.5,215.8 616.5,216.3 620.5,216.5 624.5,218.1 628.5,218.2 632.5,220.3 636.5,221.7 640.5,223.2 644.5,223.7 648.5,222.1 652.5,221.6 656.5,220.2 660.5,219.0 664.5,218.3 668.5,218.0 672.5,220.8 676.5,222.0 680.5,223.0 684.5,223.5 688.5,222.9 692.5,222.9 696.5,223.7 700.5,224.7 704.5,223.8 708.5,221.7 712.5,215.5 716.5,210.7 720.5,206.7 724.5,203.1 728.5,201.2 732.5,201.0 736.5,200.7 740.5,200.3 744.5,200.1 748.5,199.8 752.5,199.0 756.5,198.8 760.5,198.5 764.5,198.4 768.5,198.4 772.5,197.5 776.5,197.3 780.5,197.1 784.5,196.9 788.5,197.8 792.5,201.2 796.5,202.9 800.5,206.0 804.5,208.9 808.5,209.8 812.5,207.6 816.5,208.7 820.5,207.3 824.5,206.9 828.5,205.9 832.5,202.8 836.5,202.1 840.5,202.3 844.5,201.3 848.5,201.4 852.5,201.7 856.5,202.3 860.5,202.7 864.5,202.6 868.5,204.1 872.5,205.8 876.5,211.3 880.5,215.4 884.5,221.7 888.5,229.9 892.5,242.5 896.5,244.1 900.5,242.9 904.5,242.5 908.5,241.6 912.5,241.4 916.5,240.8 920.5,240.8 924.5,241.0 928.5,241.0 932.5,241.8 936.5,243.2 940.5,244.8 944.5,247.9 948.5,251.6 952.5,254.3 956.5,256.1 960.5,257.7 964.5,258.9 968.5,259.9 972.5,261.3 976.5,262.1 980.5,260.9 984.5,259.7 988.5,259.3 992.5,259.2 996.5,259.7 1000.5,259.9 1004.5,259.2 1008.5,258.9 1012.5,259.0 1016.5,259.1 1020.5,259.7 1024.5,257.9 1028.5,257.5 1032.5,256.4 1036.5,254.6 1040.5,254.4 1044.5,255.1 1048.5,254.2 1052.5,253.1 1056.5,253.6 1060.5,255.5 1064.5,258.2 1068.5,260.4 1072.5,261.3 1076.5,257.3 1080.5,255.4 1084.5,257.8 1088.5,258.8 1092.5,258.6 1096.5,258.6 1100.5,257.3 1104.5,255.3 1108.5,251.8 1112.5,249.2 1116.5,247.9 1120.5,247.0 1124.5,247.6 1128.5,248.1 1132.5,248.3 1136.5,249.1 1140.5,249.9 1144.5,250.1 1148.5,249.9 1152.5,250.5 1156.5,253.7 1160.5,254.9 1164.5,254.7 1168.5,255.4 1172.5,256.5 1176.5,256.4 1180.5,256.5 1184.5,255.1 1188.5,255.8 1192.5,256.7 1196.5,254.6 1200.5,252.6 1204.5,249.7 1208.5,248.3 1212.5,245.9 1216.5,243.9 1220.5,243.4 1224.5,243.1 1228.5,243.5 1232.5,243.6 1236.5,243.9 1240.5,244.9 1244.5,246.7 1248.5,248.9 1252.5,249.6 1256.5,249.0 1260.5,248.5 1264.5,249.0 1268.5,249.8 1272.5,250.2 1276.5,251.8 1280.5,252.3 1284.5,253.6 1288.5,253.9 1292.5,257.4 1296.5,259.4 1300.5,259.9 1304.5,260.8 1308.5,260.5 1312.5,261.4 1316.5,261.3 1320.5,261.0 1324.5,261.1 1328.5,261.8 1332.5,262.5 1336.5,262.6 1340.5,262.6 1344.5,262.6 1348.5,262.0 1352.5,262.4 1356.5,264.2 1360.5,268.8 1364.5,271.3 1368.5,270.6 1372.5,266.2 1376.5,261.9 1380.5,257.5 1384.5,254.3 1388.5,252.7 1392.5,252.0 1396.5,252.5 1400.5,256.3 1404.5,261.9 1408.5,266.1 1412.5,270.4 1416.5,272.5 1420.5,275.6 1424.5,278.6 1428.5,278.9 1432.5,281.2 1436.5,284.2 1440.5,288.3 1444.5,290.7 1448.5,290.3 1452.5,289.3 1456.5,289.1 1460.5,289.3 1464.5,290.0 1468.5,290.3 1472.5,292.4 1476.5,295.8 1480.5,296.6 1484.5,297.7 1488.5,293.0 1492.5,290.8 1496.5,291.9 1500.5,294.2 1504.5,296.3 1508.5,300.4 1512.5,303.4 1516.5,305.7 1520.5,307.4 1524.5,310.0 1528.5,313.1 1532.5,315.8 1536.5,311.5 1540.5,310.0" fill="none" stroke="#3cb371" stroke-width="1" shape-rendering="crispEdges"/><polyline points="304.5,260.0 308.5,257.4 312.5,254.4 316.5,251.7 320.5,248.7 324.5,246.7 328.5,244.5 332.5,242.5 336.5,240.7 340.5,239.0 344.5,236.8 348.5,233.2 352.5,230.6 356.5,228.5 360.5,227.1 364.5,225.8 368.5,225.5 372.5,225.3 376.5,225.0 380.5,224.5 384.5,224.1 388.5,222.9 392.5,221.4 396.5,220.0 400.5,218.6 404.5,216.5 408.5,213.6 412.5,211.2 416.5,208.5 420.5,205.4 424.5,203.1 428.5,202.5 432.5,201.1 436.5,199.2 440.5,196.2 444.5,193.8 448.5,190.8 452.5,187.4 456.5,184.1 460.5,181.1 464.5,179.4 468.5,177.5 472.5,177.1 476.5,177.3 480.5,177.3 484.5,177.9 488.5,179.2 492.5,180.1 496.5,182.0 500.5,184.1 504.5,186.3 508.5,188.3 512.5,190.7 516.5,193.4 520.5,197.1 524.5,200.1 528.5,203.2 532.5,206.4 536.5,209.4 540.5,212.4 544.5,214.2 548.5,216.9 552.5,218.1 556.5,219.2 560.5,220.2 564.5,221.4 568.5,223.2 572.5,225.0 576.5,226.3 580.5,227.6 584.5,228.9 588.5,230.6 592.5,232.9 596.5,234.3 600.5,235.6 604.5,236.6 608.5,236.8 612.5,237.3 616.5,237.4 620.5,237.5 624.5,238.4 628.5,238.4 632.5,239.4 636.5,239.9 640.5,240.3 644.5,240.5 648.5,239.8 652.5,239.3 656.5,238.5 660.5,237.8 664.5,237.4 668.5,236.6 672.5,235.2 676.5,234.4 680.5,233.6 684.5,233.3 688.5,233.6 692.5,233.7 696.5,233.9 700.5,234.2 704.5,233.2 708.5,232.7 712.5,230.8 716.5,229.2 720.5,227.9 724.5,226.3 728.5,225.4 732.5,224.9 736.5,224.6 740.5,224.2 744.5,224.5 748.5,224.9 752.5,225.5 756.5,225.8 760.5,226.2 764.5,226.4 768.5,226.4 772.5,227.1 776.5,227.7 780.5,228.5 784.5,229.9 788.5,230.5 792.5,231.9 796.5,232.3 800.5,233.2 804.5,233.8 808.5,234.0 812.5,233.4 816.5,234.8 820.5,237.5 824.5,238.7 828.5,240.1 832.5,241.9 836.5,243.7 840.5,244.8 844.5,246.8 848.5,248.2 852.5,248.7 856.5,249.3 860.5,249.8 864.5,249.7 868.5,250.5 872.5,251.5 876.5,253.7 880.5,255.4 884.5,257.4 888.5,260.0 892.5,262.7 896.5,263.5 900.5,264.1 904.5,265.2 908.5,266.2 912.5,266.3 916.5,266.8 920.5,267.9 924.5,267.5 928.5,267.8 932.5,268.7 936.5,269.9 940.5,271.2 944.5,272.4 948.5,273.5 952.5,274.3 956.5,274.8 960.5,275.2 964.5,275.5 968.5,276.0 972.5,276.5 976.5,276.8 980.5,275.8 984.5,274.8 988.5,273.8 992.5,272.9 996.5,272.5 1000.5,272.4 1004.5,271.9 1008.5,271.5 1012.5,271.2 1016.5,271.2 1020.5,270.8 1024.5,271.5 1028.5,272.2 1032.5,273.4 1036.5,275.0 1040.5,276.7 1044.5,278.6 1048.5,279.9 1052.5,281.6 1056.5,283.2 1060.5,285.1 1064.5,286.6 1068.5,287.3 1072.5,287.5 1076.5,286.5 1080.5,285.7 1084.5,286.6 1088.5,287.0 1092.5,286.9 1096.5,286.9 1100.5,286.5 1104.5,285.5 1108.5,284.2 1112.5,282.7 1116.5,281.1 1120.5,279.6 1124.5,278.7 1128.5,278.4 1132.5,278.4 1136.5,277.9 1140.5,277.5 1144.5,277.4 1148.5,278.0 1152.5,278.7 1156.5,280.4 1160.5,281.8 1164.5,282.5 1168.5,283.5 1172.5,284.1 1176.5,284.1 1180.5,284.1 1184.5,283.7 1188.5,283.9 1192.5,284.1 1196.5,283.6 1200.5,283.1 1204.5,281.8 1208.5,280.3 1212.5,277.5 1216.5,275.6 1220.5,274.3 1224.5,273.0 1228.5,272.2 1232.5,271.5 1236.5,271.2 1240.5,270.8 1244.5,269.4 1248.5,268.3 1252.5,267.8 1256.5,268.2 1260.5,269.1 1264.5,270.2 1268.5,271.4 1272.5,271.9 1276.5,272.4 1280.5,272.6 1284.5,273.1 1288.5,273.2 1292.5,274.8 1296.5,276.6 1300.5,277.9 1304.5,279.3 1308.5,280.4 1312.5,281.0 1316.5,280.9 1320.5,280.4 1324.5,280.5 1328.5,281.0 1332.5,281.5 1336.5,281.8 1340.5,281.8 1344.5,281.9 1348.5,282.6 1352.5,283.5 1356.5,284.9 1360.5,286.6 1364.5,288.2 1368.5,290.9 1372.5,293.2 1376.5,295.6 1380.5,298.3 1384.5,301.2 1388.5,303.7 1392.5,307.5 1396.5,311.3 1400.5,314.7 1404.5,318.3 1408.5,320.9 1412.5,322.6 1416.5,323.2 1420.5,324.2 1424.5,325.0 1428.5,325.1 1432.5,325.9 1436.5,327.0 1440.5,328.4 1444.5,329.2 1448.5,329.1 1452.5,328.3 1456.5,327.8 1460.5,326.8 1464.5,325.7 1468.5,324.6 1472.5,322.9 1476.5,321.1 1480.5,320.8 1484.5,320.4 1488.5,321.7 1492.5,323.7 1496.5,326.6 1500.5,329.0 1504.5,332.1 1508.5,335.0 1512.5,337.2 1516.5,339.0 1520.5,339.9 1524.5,340.9 1528.5,342.1 1532.5,342.9 1536.5,346.3 1540.5,349.6" fill="none" stroke="#3cb371" stroke-width="1" shape-rendering="crispEdges"/><polyline points="304.5,304.7 308.5,300.3 312.5,294.4 316.5,290.4 320.5,284.2 324.5,279.3 328.5,272.3 332.5,266.4 336.5,261.3 340.5,256.3 344.5,253.2 348.5,258.2 352.5,258.9 356.5,258.1 360.5,257.1 364.5,256.3 368.5,255.6 372.5,255.3 376.5,254.7 380.5,253.9 384.5,253.5 388.5,251.5 392.5,250.4 396.5,249.8 400.5,248.8 404.5,246.5 408.5,244.9 412.5,242.4 416.5,241.1 420.5,239.5 424.5,239.9 428.5,240.8 432.5,242.1 436.5,242.7 440.5,244.3 444.5,243.4 448.5,238.3 452.5,233.1 456.5,226.4 460.5,219.9 464.5,214.2 468.5,207.8 472.5,206.2 476.5,206.9 480.5,207.1 484.5,209.7 488.5,213.4 492.5,216.2 496.5,221.5 500.5,225.7 504.5,229.6 508.5,232.9 512.5,235.8 516.5,239.3 520.5,240.0 524.5,241.7 528.5,244.6 532.5,244.3 536.5,242.4 540.5,238.4 544.5,238.1 548.5,235.3 552.5,234.6 556.5,235.0 560.5,234.6 564.5,235.5 568.5,238.8 572.5,241.1 576.5,243.8 580.5,245.4 584.5,246.6 588.5,248.8 592.5,254.5 596.5,256.7 600.5,258.1 604.5,258.7 608.5,258.9 612.5,258.8 616.5,258.6 620.5,258.5 624.5,258.7 628.5,258.7 632.5,258.4 636.5,258.1 640.5,257.5 644.5,257.3 648.5,257.4 652.5,257.0 656.5,256.8 660.5,256.7 664.5,256.4 668.5,255.1 672.5,249.5 676.5,246.7 680.5,244.1 684.5,243.2 688.5,244.3 692.5,244.4 696.5,244.2 700.5,243.7 704.5,242.7 708.5,243.6 712.5,246.2 716.5,247.8 720.5,249.0 724.5,249.6 728.5,249.7 732.5,248.8 736.5,248.5 740.5,248.2 744.5,248.9 748.5,250.0 752.5,251.9 756.5,252.7 760.5,253.9 764.5,254.4 768.5,254.4 772.5,256.8 776.5,258.2 780.5,259.9 784.5,262.9 788.5,263.2 792.5,262.5 796.5,261.7 800.5,260.3 804.5,258.7 808.5,258.2 812.5,259.2 816.5,260.9 820.5,267.6 824.5,270.4 828.5,274.3 832.5,281.1 836.5,285.3 840.5,287.2 844.5,292.2 848.5,294.9 852.5,295.7 856.5,296.4 860.5,296.9 864.5,296.8 868.5,296.9 872.5,297.3 876.5,296.1 880.5,295.4 884.5,293.2 888.5,290.1 892.5,282.8 896.5,282.8 900.5,285.3 904.5,288.0 908.5,290.7 912.5,291.2 916.5,292.7 920.5,295.0 924.5,294.1 928.5,294.7 932.5,295.6 936.5,296.5 940.5,297.5 944.5,296.9 948.5,295.4 952.5,294.3 956.5,293.5 960.5,292.7 964.5,292.0 968.5,292.1 972.5,291.7 976.5,291.4 980.5,290.6 984.5,290.0 988.5,288.4 992.5,286.5 996.5,285.2 1000.5,284.9 1004.5,284.7 1008.5,284.1 1012.5,283.5 1016.5,283.3 1020.5,281.9 1024.5,285.1 1028.5,286.9 1032.5,290.3 1036.5,295.3 1040.5,298.9 1044.5,302.2 1048.5,305.6 1052.5,310.1 1056.5,312.9 1060.5,314.7 1064.5,314.9 1068.5,314.2 1072.5,313.8 1076.5,315.7 1080.5,316.0 1084.5,315.5 1088.5,315.1 1092.5,315.2 1096.5,315.2 1100.5,315.7 1104.5,315.7 1108.5,316.6 1112.5,316.2 1116.5,314.2 1120.5,312.1 1124.5,309.8 1128.5,308.8 1132.5,308.5 1136.5,306.8 1140.5,305.1 1144.5,304.7 1148.5,306.0 1152.5,306.8 1156.5,307.1 1160.5,308.7 1164.5,310.2 1168.5,311.6 1172.5,311.7 1176.5,311.7 1180.5,311.7 1184.5,312.3 1188.5,312.0 1192.5,311.5 1196.5,312.6 1200.5,313.5 1204.5,313.9 1208.5,312.3 1212.5,309.2 1216.5,307.4 1220.5,305.1 1224.5,303.0 1228.5,300.8 1232.5,299.4 1236.5,298.6 1240.5,296.6 1244.5,292.1 1248.5,287.8 1252.5,286.0 1256.5,287.4 1260.5,289.7 1264.5,291.5 1268.5,293.0 1272.5,293.5 1276.5,293.1 1280.5,292.8 1284.5,292.5 1288.5,292.5 1292.5,292.2 1296.5,293.8 1300.5,296.0 1304.5,297.8 1308.5,300.4 1312.5,300.6 1316.5,300.4 1320.5,299.8 1324.5,299.8 1328.5,300.2 1332.5,300.5 1336.5,300.9 1340.5,300.9 1344.5,301.1 1348.5,303.1 1352.5,304.6 1356.5,305.6 1360.5,304.3 1364.5,305.2 1368.5,311.1 1372.5,320.3 1376.5,329.3 1380.5,339.1 1384.5,348.2 1388.5,354.7 1392.5,362.9 1396.5,370.1 1400.5,373.0 1404.5,374.8 1408.5,375.6 1412.5,374.8 1416.5,374.0 1420.5,372.8 1424.5,371.5 1428.5,371.4 1432.5,370.6 1436.5,369.8 1440.5,368.6 1444.5,367.8 1448.5,367.8 1452.5,367.3 1456.5,366.4 1460.5,364.3 1464.5,361.4 1468.5,358.9 1472.5,353.3 1476.5,346.5 1480.5,345.0 1484.5,343.0 1488.5,350.5 1492.5,356.7 1496.5,361.3 1500.5,363.9 1504.5,367.8 1508.5,369.6 1512.5,371.1 1516.5,372.2 1520.5,372.3 1524.5,371.7 1528.5,371.1 1532.5,370.0 1536.5,381.1 1540.5,389.2" fill="none" stroke="#3cb371" stroke-width="1" shape-rendering="crispEdges"/><path d="M304 224.5H1858" stroke="#18d818" stroke-dasharray="9 6 3 6"/><path d="M304 389.5H1858" stroke="#18d818" stroke-dasharray="9 6 3 6"/><path d="M305 370.5H1858" stroke="#ff0000"/><path d="M305 394.5H1858" stroke="#8797aa"/><text x="313" y="222" fill="#fff" font-family="Liberation Sans" font-size="12.5">#13342923 sell 0.55</text><text x="313" y="387" fill="#fff" font-family="Liberation Sans" font-size="12.5">#13341473 sell 0.11</text><path d="M304.5 221V242" stroke="#00ff00"/><rect x="303.5" y="229.5" width="2" height="4" fill="#000" stroke="#00ff00"/><path d="M308.5 228V253" stroke="#00ff00"/><rect x="307.5" y="230.5" width="2" height="10" fill="#fff" stroke="#00ff00"/><path d="M312.5 231V252" stroke="#00ff00"/><rect x="311.5" y="236.5" width="2" height="3" fill="#000" stroke="#00ff00"/><path d="M316.5 228V252" stroke="#00ff00"/><rect x="315.5" y="231.5" width="2" height="7" fill="#000" stroke="#00ff00"/><path d="M320.5 230V244" stroke="#00ff00"/><rect x="319.5" y="231.5" width="2" height="3" fill="#000" stroke="#00ff00"/><path d="M324.5 231V244" stroke="#00ff00"/><rect x="323.5" y="232.5" width="2" height="7" fill="#fff" stroke="#00ff00"/><path d="M328.5 237V254" stroke="#00ff00"/><rect x="327.5" y="241.5" width="2" height="1" fill="#000" stroke="#00ff00"/><path d="M332.5 230V249" stroke="#00ff00"/><rect x="331.5" y="237.5" width="2" height="5" fill="#000" stroke="#00ff00"/><path d="M336.5 222V243" stroke="#00ff00"/><rect x="335.5" y="233.5" width="2" height="1" fill="#000" stroke="#00ff00"/><path d="M340.5 230V247" stroke="#00ff00"/><rect x="339.5" y="233.5" width="2" height="1" fill="#000" stroke="#00ff00"/><path d="M344.5 209V233" stroke="#00ff00"/><rect x="343.5" y="217.5" width="2" height="14" fill="#000" stroke="#00ff00"/><path d="M348.5 184V219" stroke="#00ff00"/><rect x="347.5" y="187.5" width="2" height="30" fill="#000" stroke="#00ff00"/><path d="M352.5 186V213" stroke="#00ff00"/><rect x="351.5" y="186.5" width="2" height="11" fill="#fff" stroke="#00ff00"/><path d="M356.5 193V219" stroke="#00ff00"/><rect x="355.5" y="197.5" width="2" height="7" fill="#fff" stroke="#00ff00"/><path d="M360.5 200V221" stroke="#00ff00"/><rect x="359.5" y="211.5" width="2" height="6" fill="#000" stroke="#00ff00"/><path d="M364.5 207V218" stroke="#00ff00"/><rect x="363.5" y="211.5" width="2" height="2" fill="#000" stroke="#00ff00"/><path d="M368.5 208V252" stroke="#00ff00"/><rect x="367.5" y="217.5" width="2" height="14" fill="#fff" stroke="#00ff00"/><path d="M372.5 227V242" stroke="#00ff00"/><rect x="371.5" y="229.5" width="2" height="1" fill="#000" stroke="#00ff00"/><path d="M376.5 226V244" stroke="#00ff00"/><rect x="375.5" y="230.5" width="2" height="1" fill="#000" stroke="#00ff00"/><path d="M380.5 220V235" stroke="#00ff00"/><rect x="379.5" y="224.5" width="2" height="5" fill="#000" stroke="#00ff00"/><path d="M384.5 218V238" stroke="#00ff00"/><rect x="383.5" y="220.5" width="2" height="4" fill="#000" stroke="#00ff00"/><path d="M388.5 213V240" stroke="#00ff00"/><rect x="387.5" y="217.5" width="2" height="5" fill="#000" stroke="#00ff00"/><path d="M392.5 203V230" stroke="#00ff00"/><rect x="391.5" y="206.5" width="2" height="11" fill="#000" stroke="#00ff00"/><path d="M396.5 201V212" stroke="#00ff00"/><rect x="395.5" y="202.5" width="2" height="5" fill="#000" stroke="#00ff00"/><path d="M400.5 198V218" stroke="#00ff00"/><rect x="399.5" y="200.5" width="2" height="3" fill="#fff" stroke="#00ff00"/><path d="M404.5 192V210" stroke="#00ff00"/><rect x="403.5" y="197.5" width="2" height="4" fill="#000" stroke="#00ff00"/><path d="M408.5 182V202" stroke="#00ff00"/><rect x="407.5" y="182.5" width="2" height="15" fill="#000" stroke="#00ff00"/><path d="M412.5 177V192" stroke="#00ff00"/><rect x="411.5" y="178.5" width="2" height="11" fill="#fff" stroke="#00ff00"/><path d="M416.5 177V191" stroke="#00ff00"/><rect x="415.5" y="179.5" width="2" height="10" fill="#000" stroke="#00ff00"/><path d="M420.5 169V184" stroke="#00ff00"/><rect x="419.5" y="172.5" width="2" height="9" fill="#000" stroke="#00ff00"/><path d="M424.5 168V182" stroke="#00ff00"/><rect x="423.5" y="171.5" width="2" height="1" fill="#000" stroke="#00ff00"/><path d="M428.5 169V182" stroke="#00ff00"/><rect x="427.5" y="171.5" width="2" height="3" fill="#fff" stroke="#00ff00"/><path d="M432.5 167V178" stroke="#00ff00"/><rect x="431.5" y="168.5" width="2" height="8" fill="#000" stroke="#00ff00"/><path d="M436.5 162V172" stroke="#00ff00"/><rect x="435.5" y="168.5" width="2" height="1" fill="#000" stroke="#00ff00"/><path d="M440.5 145V171" stroke="#00ff00"/><rect x="439.5" y="150.5" width="2" height="19" fill="#000" stroke="#00ff00"/><path d="M444.5 143V165" stroke="#00ff00"/><rect x="443.5" y="153.5" width="2" height="10" fill="#fff" stroke="#00ff00"/><path d="M448.5 161V175" stroke="#00ff00"/><rect x="447.5" y="162.5" width="2" height="8" fill="#fff" stroke="#00ff00"/><path d="M452.5 161V174" stroke="#00ff00"/><rect x="451.5" y="162.5" width="2" height="7" fill="#000" stroke="#00ff00"/><path d="M456.5 156V173" stroke="#00ff00"/><rect x="455.5" y="163.5" width="2" height="3" fill="#000" stroke="#00ff00"/><path d="M460.5 162V170" stroke="#00ff00"/><rect x="459.5" y="164.5" width="2" height="1" fill="#000" stroke="#00ff00"/><path d="M464.5 163V190" stroke="#00ff00"/><rect x="463.5" y="166.5" width="2" height="22" fill="#fff" stroke="#00ff00"/><path d="M468.5 175V187" stroke="#00ff00"/><rect x="467.5" y="178.5" width="2" height="8" fill="#000" stroke="#00ff00"/><path d="M472.5 177V205" stroke="#00ff00"/><rect x="471.5" y="179.5" width="2" height="19" fill="#fff" stroke="#00ff00"/><path d="M476.5 196V207" stroke="#00ff00"/><rect x="475.5" y="196.5" width="2" height="9" fill="#fff" stroke="#00ff00"/><path d="M480.5 196V211" stroke="#00ff00"/><rect x="479.5" y="204.5" width="2" height="2" fill="#000" stroke="#00ff00"/><path d="M484.5 201V217" stroke="#00ff00"/><rect x="483.5" y="203.5" width="2" height="6" fill="#fff" stroke="#00ff00"/><path d="M488.5 202V220" stroke="#00ff00"/><rect x="487.5" y="207.5" width="2" height="1" fill="#000" stroke="#00ff00"/><path d="M492.5 199V220" stroke="#00ff00"/><rect x="491.5" y="207.5" width="2" height="1" fill="#000" stroke="#00ff00"/><path d="M496.5 202V219" stroke="#00ff00"/><rect x="495.5" y="208.5" width="2" height="9" fill="#fff" stroke="#00ff00"/><path d="M500.5 209V225" stroke="#00ff00"/><rect x="499.5" y="214.5" width="2" height="2" fill="#000" stroke="#00ff00"/><path d="M504.5 209V230" stroke="#00ff00"/><rect x="503.5" y="216.5" width="2" height="1" fill="#000" stroke="#00ff00"/><path d="M508.5 209V230" stroke="#00ff00"/><rect x="507.5" y="214.5" width="2" height="3" fill="#000" stroke="#00ff00"/><path d="M512.5 213V231" stroke="#00ff00"/><rect x="511.5" y="216.5" width="2" height="2" fill="#000" stroke="#00ff00"/><path d="M516.5 210V237" stroke="#00ff00"/><rect x="515.5" y="216.5" width="2" height="7" fill="#fff" stroke="#00ff00"/><path d="M520.5 218V238" stroke="#00ff00"/><rect x="519.5" y="222.5" width="2" height="1" fill="#000" stroke="#00ff00"/><path d="M524.5 221V238" stroke="#00ff00"/><rect x="523.5" y="224.5" width="2" height="2" fill="#000" stroke="#00ff00"/><path d="M528.5 222V245" stroke="#00ff00"/><rect x="527.5" y="224.5" width="2" height="8" fill="#fff" stroke="#00ff00"/><path d="M532.5 221V245" stroke="#00ff00"/><rect x="531.5" y="226.5" width="2" height="6" fill="#000" stroke="#00ff00"/><path d="M536.5 222V238" stroke="#00ff00"/><rect x="535.5" y="223.5" width="2" height="3" fill="#000" stroke="#00ff00"/><path d="M540.5 219V238" stroke="#00ff00"/><rect x="539.5" y="223.5" width="2" height="1" fill="#000" stroke="#00ff00"/><path d="M544.5 220V238" stroke="#00ff00"/><rect x="543.5" y="224.5" width="2" height="2" fill="#000" stroke="#00ff00"/><path d="M548.5 219V237" stroke="#00ff00"/><rect x="547.5" y="224.5" width="2" height="8" fill="#fff" stroke="#00ff00"/><path d="M552.5 219V243" stroke="#00ff00"/><rect x="551.5" y="223.5" width="2" height="9" fill="#000" stroke="#00ff00"/><path d="M556.5 220V244" stroke="#00ff00"/><rect x="555.5" y="224.5" width="2" height="3" fill="#fff" stroke="#00ff00"/><path d="M560.5 221V238" stroke="#00ff00"/><rect x="559.5" y="225.5" width="2" height="1" fill="#000" stroke="#00ff00"/><path d="M564.5 226V247" stroke="#00ff00"/><rect x="563.5" y="227.5" width="2" height="4" fill="#fff" stroke="#00ff00"/><path d="M568.5 233V247" stroke="#00ff00"/><rect x="567.5" y="234.5" width="2" height="9" fill="#fff" stroke="#00ff00"/><path d="M572.5 238V252" stroke="#00ff00"/><rect x="571.5" y="243.5" width="2" height="1" fill="#000" stroke="#00ff00"/><path d="M576.5 234V252" stroke="#00ff00"/><rect x="575.5" y="243.5" width="2" height="1" fill="#000" stroke="#00ff00"/><path d="M580.5 237V252" stroke="#00ff00"/><rect x="579.5" y="241.5" width="2" height="1" fill="#000" stroke="#00ff00"/><path d="M584.5 239V255" stroke="#00ff00"/><rect x="583.5" y="241.5" width="2" height="2" fill="#000" stroke="#00ff00"/><path d="M588.5 246V257" stroke="#00ff00"/><rect x="587.5" y="248.5" width="2" height="1" fill="#000" stroke="#00ff00"/><path d="M592.5 249V272" stroke="#00ff00"/><rect x="591.5" y="251.5" width="2" height="11" fill="#fff" stroke="#00ff00"/><path d="M596.5 247V269" stroke="#00ff00"/><rect x="595.5" y="251.5" width="2" height="9" fill="#000" stroke="#00ff00"/><path d="M600.5 244V253" stroke="#00ff00"/><rect x="599.5" y="248.5" width="2" height="2" fill="#000" stroke="#00ff00"/><path d="M604.5 242V253" stroke="#00ff00"/><rect x="603.5" y="243.5" width="2" height="5" fill="#000" stroke="#00ff00"/><path d="M608.5 236V255" stroke="#00ff00"/><rect x="607.5" y="238.5" width="2" height="4" fill="#000" stroke="#00ff00"/><path d="M612.5 232V242" stroke="#00ff00"/><rect x="611.5" y="234.5" width="2" height="3" fill="#000" stroke="#00ff00"/><path d="M616.5 223V242" stroke="#00ff00"/><rect x="615.5" y="226.5" width="2" height="11" fill="#000" stroke="#00ff00"/><path d="M620.5 223V230" stroke="#00ff00"/><rect x="619.5" y="224.5" width="2" height="4" fill="#000" stroke="#00ff00"/><path d="M624.5 224V245" stroke="#00ff00"/><rect x="623.5" y="226.5" width="2" height="17" fill="#fff" stroke="#00ff00"/><path d="M628.5 230V238" stroke="#00ff00"/><rect x="627.5" y="232.5" width="2" height="4" fill="#000" stroke="#00ff00"/><path d="M632.5 232V245" stroke="#00ff00"/><rect x="631.5" y="234.5" width="2" height="8" fill="#fff" stroke="#00ff00"/><path d="M636.5 237V245" stroke="#00ff00"/><rect x="635.5" y="237.5" width="2" height="4" fill="#000" stroke="#00ff00"/><path d="M640.5 231V254" stroke="#00ff00"/><rect x="639.5" y="233.5" width="2" height="8" fill="#000" stroke="#00ff00"/><path d="M644.5 232V250" stroke="#00ff00"/><rect x="643.5" y="235.5" width="2" height="2" fill="#000" stroke="#00ff00"/><path d="M648.5 227V247" stroke="#00ff00"/><rect x="647.5" y="228.5" width="2" height="8" fill="#000" stroke="#00ff00"/><path d="M652.5 226V245" stroke="#00ff00"/><rect x="651.5" y="228.5" width="2" height="6" fill="#fff" stroke="#00ff00"/><path d="M656.5 227V246" stroke="#00ff00"/><rect x="655.5" y="228.5" width="2" height="16" fill="#000" stroke="#00ff00"/><path d="M660.5 223V235" stroke="#00ff00"/><rect x="659.5" y="227.5" width="2" height="1" fill="#000" stroke="#00ff00"/><path d="M664.5 224V244" stroke="#00ff00"/><rect x="663.5" y="224.5" width="2" height="7" fill="#fff" stroke="#00ff00"/><path d="M668.5 230V244" stroke="#00ff00"/><rect x="667.5" y="232.5" width="2" height="1" fill="#000" stroke="#00ff00"/><path d="M672.5 232V249" stroke="#00ff00"/><rect x="671.5" y="234.5" width="2" height="2" fill="#000" stroke="#00ff00"/><path d="M676.5 231V240" stroke="#00ff00"/><rect x="675.5" y="234.5" width="2" height="2" fill="#000" stroke="#00ff00"/><path d="M680.5 230V247" stroke="#00ff00"/><rect x="679.5" y="232.5" width="2" height="4" fill="#000" stroke="#00ff00"/><path d="M684.5 230V242" stroke="#00ff00"/><rect x="683.5" y="234.5" width="2" height="4" fill="#fff" stroke="#00ff00"/><path d="M688.5 239V247" stroke="#00ff00"/><rect x="687.5" y="239.5" width="2" height="5" fill="#fff" stroke="#00ff00"/><path d="M692.5 235V245" stroke="#00ff00"/><rect x="691.5" y="236.5" width="2" height="8" fill="#000" stroke="#00ff00"/><path d="M696.5 231V245" stroke="#00ff00"/><rect x="695.5" y="231.5" width="2" height="7" fill="#000" stroke="#00ff00"/><path d="M700.5 229V233" stroke="#00ff00"/><rect x="699.5" y="230.5" width="2" height="1" fill="#000" stroke="#00ff00"/><path d="M704.5 221V235" stroke="#00ff00"/><rect x="703.5" y="224.5" width="2" height="7" fill="#000" stroke="#00ff00"/><path d="M708.5 214V232" stroke="#00ff00"/><rect x="707.5" y="221.5" width="2" height="10" fill="#000" stroke="#00ff00"/><path d="M712.5 204V230" stroke="#00ff00"/><rect x="711.5" y="206.5" width="2" height="12" fill="#000" stroke="#00ff00"/><path d="M716.5 204V218" stroke="#00ff00"/><rect x="715.5" y="206.5" width="2" height="1" fill="#000" stroke="#00ff00"/><path d="M720.5 204V218" stroke="#00ff00"/><rect x="719.5" y="206.5" width="2" height="2" fill="#000" stroke="#00ff00"/><path d="M724.5 201V218" stroke="#00ff00"/><rect x="723.5" y="204.5" width="2" height="4" fill="#000" stroke="#00ff00"/><path d="M728.5 202V217" stroke="#00ff00"/><rect x="727.5" y="202.5" width="2" height="9" fill="#fff" stroke="#00ff00"/><path d="M732.5 211V225" stroke="#00ff00"/><rect x="731.5" y="213.5" width="2" height="11" fill="#fff" stroke="#00ff00"/><path d="M736.5 216V235" stroke="#00ff00"/><rect x="735.5" y="221.5" width="2" height="2" fill="#000" stroke="#00ff00"/><path d="M740.5 212V234" stroke="#00ff00"/><rect x="739.5" y="220.5" width="2" height="2" fill="#000" stroke="#00ff00"/><path d="M744.5 220V238" stroke="#00ff00"/><rect x="743.5" y="223.5" width="2" height="14" fill="#fff" stroke="#00ff00"/><path d="M748.5 233V245" stroke="#00ff00"/><rect x="747.5" y="234.5" width="2" height="6" fill="#fff" stroke="#00ff00"/><path d="M752.5 235V248" stroke="#00ff00"/><rect x="751.5" y="241.5" width="2" height="5" fill="#fff" stroke="#00ff00"/><path d="M756.5 239V255" stroke="#00ff00"/><rect x="755.5" y="240.5" width="2" height="4" fill="#000" stroke="#00ff00"/><path d="M760.5 234V247" stroke="#00ff00"/><rect x="759.5" y="242.5" width="2" height="1" fill="#000" stroke="#00ff00"/><path d="M764.5 231V252" stroke="#00ff00"/><rect x="763.5" y="242.5" width="2" height="1" fill="#000" stroke="#00ff00"/><path d="M768.5 239V247" stroke="#00ff00"/><rect x="767.5" y="241.5" width="2" height="3" fill="#fff" stroke="#00ff00"/><path d="M772.5 241V263" stroke="#00ff00"/><rect x="771.5" y="243.5" width="2" height="7" fill="#fff" stroke="#00ff00"/><path d="M776.5 240V263" stroke="#00ff00"/><rect x="775.5" y="243.5" width="2" height="7" fill="#000" stroke="#00ff00"/><path d="M780.5 243V260" stroke="#00ff00"/><rect x="779.5" y="246.5" width="2" height="2" fill="#000" stroke="#00ff00"/><path d="M784.5 239V254" stroke="#00ff00"/><rect x="783.5" y="240.5" width="2" height="12" fill="#fff" stroke="#00ff00"/><path d="M788.5 230V252" stroke="#00ff00"/><rect x="787.5" y="232.5" width="2" height="7" fill="#000" stroke="#00ff00"/><path d="M792.5 227V245" stroke="#00ff00"/><rect x="791.5" y="233.5" width="2" height="1" fill="#000" stroke="#00ff00"/><path d="M796.5 210V239" stroke="#00ff00"/><rect x="795.5" y="214.5" width="2" height="23" fill="#000" stroke="#00ff00"/><path d="M800.5 202V230" stroke="#00ff00"/><rect x="799.5" y="212.5" width="2" height="11" fill="#fff" stroke="#00ff00"/><path d="M804.5 212V230" stroke="#00ff00"/><rect x="803.5" y="216.5" width="2" height="9" fill="#000" stroke="#00ff00"/><path d="M808.5 211V228" stroke="#00ff00"/><rect x="807.5" y="215.5" width="2" height="1" fill="#000" stroke="#00ff00"/><path d="M812.5 210V225" stroke="#00ff00"/><rect x="811.5" y="211.5" width="2" height="2" fill="#000" stroke="#00ff00"/><path d="M816.5 212V252" stroke="#00ff00"/><rect x="815.5" y="212.5" width="2" height="38" fill="#fff" stroke="#00ff00"/><path d="M820.5 247V288" stroke="#00ff00"/><rect x="819.5" y="247.5" width="2" height="26" fill="#fff" stroke="#00ff00"/><path d="M824.5 258V275" stroke="#00ff00"/><rect x="823.5" y="261.5" width="2" height="13" fill="#000" stroke="#00ff00"/><path d="M828.5 261V272" stroke="#00ff00"/><rect x="827.5" y="264.5" width="2" height="4" fill="#fff" stroke="#00ff00"/><path d="M832.5 265V285" stroke="#00ff00"/><rect x="831.5" y="269.5" width="2" height="15" fill="#fff" stroke="#00ff00"/><path d="M836.5 270V285" stroke="#00ff00"/><rect x="835.5" y="274.5" width="2" height="10" fill="#000" stroke="#00ff00"/><path d="M840.5 263V279" stroke="#00ff00"/><rect x="839.5" y="263.5" width="2" height="14" fill="#000" stroke="#00ff00"/><path d="M844.5 264V295" stroke="#00ff00"/><rect x="843.5" y="267.5" width="2" height="15" fill="#fff" stroke="#00ff00"/><path d="M848.5 266V288" stroke="#00ff00"/><rect x="847.5" y="272.5" width="2" height="11" fill="#000" stroke="#00ff00"/><path d="M852.5 259V288" stroke="#00ff00"/><rect x="851.5" y="259.5" width="2" height="13" fill="#000" stroke="#00ff00"/><path d="M856.5 253V280" stroke="#00ff00"/><rect x="855.5" y="257.5" width="2" height="1" fill="#000" stroke="#00ff00"/><path d="M860.5 254V273" stroke="#00ff00"/><rect x="859.5" y="256.5" width="2" height="1" fill="#000" stroke="#00ff00"/><path d="M864.5 248V274" stroke="#00ff00"/><rect x="863.5" y="250.5" width="2" height="8" fill="#000" stroke="#00ff00"/><path d="M868.5 245V260" stroke="#00ff00"/><rect x="867.5" y="248.5" width="2" height="1" fill="#000" stroke="#00ff00"/><path d="M872.5 246V262" stroke="#00ff00"/><rect x="871.5" y="252.5" width="2" height="1" fill="#fff" stroke="#00ff00"/><path d="M876.5 249V260" stroke="#00ff00"/><rect x="875.5" y="255.5" width="2" height="2" fill="#fff" stroke="#00ff00"/><path d="M880.5 257V272" stroke="#00ff00"/><rect x="879.5" y="257.5" width="2" height="1" fill="#000" stroke="#00ff00"/><path d="M884.5 253V270" stroke="#00ff00"/><rect x="883.5" y="257.5" width="2" height="1" fill="#000" stroke="#00ff00"/><path d="M888.5 254V270" stroke="#00ff00"/><rect x="887.5" y="256.5" width="2" height="11" fill="#fff" stroke="#00ff00"/><path d="M892.5 257V273" stroke="#00ff00"/><rect x="891.5" y="264.5" width="2" height="2" fill="#000" stroke="#00ff00"/><path d="M896.5 258V280" stroke="#00ff00"/><rect x="895.5" y="266.5" width="2" height="11" fill="#000" stroke="#00ff00"/><path d="M900.5 264V298" stroke="#00ff00"/><rect x="899.5" y="268.5" width="2" height="18" fill="#fff" stroke="#00ff00"/><path d="M904.5 280V298" stroke="#00ff00"/><rect x="903.5" y="283.5" width="2" height="4" fill="#000" stroke="#00ff00"/><path d="M908.5 279V295" stroke="#00ff00"/><rect x="907.5" y="285.5" width="2" height="2" fill="#fff" stroke="#00ff00"/><path d="M912.5 277V295" stroke="#00ff00"/><rect x="911.5" y="284.5" width="2" height="2" fill="#fff" stroke="#00ff00"/><path d="M916.5 273V292" stroke="#00ff00"/><rect x="915.5" y="284.5" width="2" height="2" fill="#000" stroke="#00ff00"/><path d="M920.5 278V294" stroke="#00ff00"/><rect x="919.5" y="284.5" width="2" height="2" fill="#fff" stroke="#00ff00"/><path d="M924.5 272V298" stroke="#00ff00"/><rect x="923.5" y="275.5" width="2" height="13" fill="#000" stroke="#00ff00"/><path d="M928.5 267V287" stroke="#00ff00"/><rect x="927.5" y="274.5" width="2" height="4" fill="#fff" stroke="#00ff00"/><path d="M932.5 271V283" stroke="#00ff00"/><rect x="931.5" y="275.5" width="2" height="3" fill="#fff" stroke="#00ff00"/><path d="M936.5 274V289" stroke="#00ff00"/><rect x="935.5" y="278.5" width="2" height="1" fill="#fff" stroke="#00ff00"/><path d="M940.5 271V289" stroke="#00ff00"/><rect x="939.5" y="281.5" width="2" height="1" fill="#fff" stroke="#00ff00"/><path d="M944.5 272V287" stroke="#00ff00"/><rect x="943.5" y="274.5" width="2" height="5" fill="#000" stroke="#00ff00"/><path d="M948.5 262V282" stroke="#00ff00"/><rect x="947.5" y="271.5" width="2" height="6" fill="#000" stroke="#00ff00"/><path d="M952.5 268V285" stroke="#00ff00"/><rect x="951.5" y="269.5" width="2" height="9" fill="#000" stroke="#00ff00"/><path d="M956.5 259V281" stroke="#00ff00"/><rect x="955.5" y="268.5" width="2" height="3" fill="#000" stroke="#00ff00"/><path d="M960.5 261V280" stroke="#00ff00"/><rect x="959.5" y="265.5" width="2" height="1" fill="#000" stroke="#00ff00"/><path d="M964.5 257V272" stroke="#00ff00"/><rect x="963.5" y="262.5" width="2" height="5" fill="#000" stroke="#00ff00"/><path d="M968.5 261V279" stroke="#00ff00"/><rect x="967.5" y="261.5" width="2" height="16" fill="#fff" stroke="#00ff00"/><path d="M972.5 272V287" stroke="#00ff00"/><rect x="971.5" y="274.5" width="2" height="2" fill="#000" stroke="#00ff00"/><path d="M976.5 264V282" stroke="#00ff00"/><rect x="975.5" y="271.5" width="2" height="1" fill="#000" stroke="#00ff00"/><path d="M980.5 264V277" stroke="#00ff00"/><rect x="979.5" y="266.5" width="2" height="7" fill="#000" stroke="#00ff00"/><path d="M984.5 262V282" stroke="#00ff00"/><rect x="983.5" y="265.5" width="2" height="2" fill="#000" stroke="#00ff00"/><path d="M988.5 260V279" stroke="#00ff00"/><rect x="987.5" y="266.5" width="2" height="2" fill="#000" stroke="#00ff00"/><path d="M992.5 257V270" stroke="#00ff00"/><rect x="991.5" y="266.5" width="2" height="1" fill="#fff" stroke="#00ff00"/><path d="M996.5 264V279" stroke="#00ff00"/><rect x="995.5" y="264.5" width="2" height="13" fill="#fff" stroke="#00ff00"/><path d="M1000.5 266V289" stroke="#00ff00"/><rect x="999.5" y="276.5" width="2" height="8" fill="#fff" stroke="#00ff00"/><path d="M1004.5 262V293" stroke="#00ff00"/><rect x="1003.5" y="266.5" width="2" height="18" fill="#000" stroke="#00ff00"/><path d="M1008.5 264V280" stroke="#00ff00"/><rect x="1007.5" y="265.5" width="2" height="3" fill="#fff" stroke="#00ff00"/><path d="M1012.5 266V284" stroke="#00ff00"/><rect x="1011.5" y="267.5" width="2" height="6" fill="#fff" stroke="#00ff00"/><path d="M1016.5 272V287" stroke="#00ff00"/><rect x="1015.5" y="274.5" width="2" height="4" fill="#fff" stroke="#00ff00"/><path d="M1020.5 273V297" stroke="#00ff00"/><rect x="1019.5" y="274.5" width="2" height="2" fill="#000" stroke="#00ff00"/><path d="M1024.5 276V304" stroke="#00ff00"/><rect x="1023.5" y="276.5" width="2" height="13" fill="#fff" stroke="#00ff00"/><path d="M1028.5 281V299" stroke="#00ff00"/><rect x="1027.5" y="284.5" width="2" height="6" fill="#000" stroke="#00ff00"/><path d="M1032.5 281V305" stroke="#00ff00"/><rect x="1031.5" y="283.5" width="2" height="9" fill="#fff" stroke="#00ff00"/><path d="M1036.5 291V305" stroke="#00ff00"/><rect x="1035.5" y="291.5" width="2" height="9" fill="#fff" stroke="#00ff00"/><path d="M1040.5 291V305" stroke="#00ff00"/><rect x="1039.5" y="299.5" width="2" height="5" fill="#000" stroke="#00ff00"/><path d="M1044.5 297V310" stroke="#00ff00"/><rect x="1043.5" y="299.5" width="2" height="2" fill="#fff" stroke="#00ff00"/><path d="M1048.5 298V308" stroke="#00ff00"/><rect x="1047.5" y="302.5" width="2" height="1" fill="#000" stroke="#00ff00"/><path d="M1052.5 300V314" stroke="#00ff00"/><rect x="1051.5" y="301.5" width="2" height="8" fill="#fff" stroke="#00ff00"/><path d="M1056.5 298V320" stroke="#00ff00"/><rect x="1055.5" y="304.5" width="2" height="1" fill="#000" stroke="#00ff00"/><path d="M1060.5 299V322" stroke="#00ff00"/><rect x="1059.5" y="303.5" width="2" height="1" fill="#000" stroke="#00ff00"/><path d="M1064.5 291V313" stroke="#00ff00"/><rect x="1063.5" y="294.5" width="2" height="10" fill="#000" stroke="#00ff00"/><path d="M1068.5 280V298" stroke="#00ff00"/><rect x="1067.5" y="281.5" width="2" height="13" fill="#000" stroke="#00ff00"/><path d="M1072.5 271V293" stroke="#00ff00"/><rect x="1071.5" y="272.5" width="2" height="11" fill="#000" stroke="#00ff00"/><path d="M1076.5 248V287" stroke="#00ff00"/><rect x="1075.5" y="257.5" width="2" height="17" fill="#000" stroke="#00ff00"/><path d="M1080.5 254V285" stroke="#00ff00"/><rect x="1079.5" y="257.5" width="2" height="11" fill="#fff" stroke="#00ff00"/><path d="M1084.5 266V299" stroke="#00ff00"/><rect x="1083.5" y="269.5" width="2" height="15" fill="#fff" stroke="#00ff00"/><path d="M1088.5 272V298" stroke="#00ff00"/><rect x="1087.5" y="275.5" width="2" height="9" fill="#000" stroke="#00ff00"/><path d="M1092.5 271V289" stroke="#00ff00"/><rect x="1091.5" y="272.5" width="2" height="4" fill="#000" stroke="#00ff00"/><path d="M1096.5 263V279" stroke="#00ff00"/><rect x="1095.5" y="271.5" width="2" height="6" fill="#fff" stroke="#00ff00"/><path d="M1100.5 264V279" stroke="#00ff00"/><rect x="1099.5" y="267.5" width="2" height="10" fill="#000" stroke="#00ff00"/><path d="M1104.5 262V281" stroke="#00ff00"/><rect x="1103.5" y="264.5" width="2" height="5" fill="#fff" stroke="#00ff00"/><path d="M1108.5 250V287" stroke="#00ff00"/><rect x="1107.5" y="258.5" width="2" height="13" fill="#000" stroke="#00ff00"/><path d="M1112.5 252V269" stroke="#00ff00"/><rect x="1111.5" y="260.5" width="2" height="2" fill="#fff" stroke="#00ff00"/><path d="M1116.5 257V281" stroke="#00ff00"/><rect x="1115.5" y="261.5" width="2" height="6" fill="#fff" stroke="#00ff00"/><path d="M1120.5 263V281" stroke="#00ff00"/><rect x="1119.5" y="267.5" width="2" height="2" fill="#fff" stroke="#00ff00"/><path d="M1124.5 267V288" stroke="#00ff00"/><rect x="1123.5" y="268.5" width="2" height="16" fill="#fff" stroke="#00ff00"/><path d="M1128.5 283V308" stroke="#00ff00"/><rect x="1127.5" y="283.5" width="2" height="14" fill="#fff" stroke="#00ff00"/><path d="M1132.5 292V315" stroke="#00ff00"/><rect x="1131.5" y="296.5" width="2" height="12" fill="#fff" stroke="#00ff00"/><path d="M1136.5 291V313" stroke="#00ff00"/><rect x="1135.5" y="295.5" width="2" height="12" fill="#000" stroke="#00ff00"/><path d="M1140.5 290V304" stroke="#00ff00"/><rect x="1139.5" y="292.5" width="2" height="2" fill="#fff" stroke="#00ff00"/><path d="M1144.5 285V304" stroke="#00ff00"/><rect x="1143.5" y="292.5" width="2" height="1" fill="#000" stroke="#00ff00"/><path d="M1148.5 285V299" stroke="#00ff00"/><rect x="1147.5" y="292.5" width="2" height="1" fill="#000" stroke="#00ff00"/><path d="M1152.5 284V304" stroke="#00ff00"/><rect x="1151.5" y="286.5" width="2" height="5" fill="#000" stroke="#00ff00"/><path d="M1156.5 287V305" stroke="#00ff00"/><rect x="1155.5" y="288.5" width="2" height="3" fill="#fff" stroke="#00ff00"/><path d="M1160.5 289V307" stroke="#00ff00"/><rect x="1159.5" y="293.5" width="2" height="3" fill="#fff" stroke="#00ff00"/><path d="M1164.5 291V313" stroke="#00ff00"/><rect x="1163.5" y="293.5" width="2" height="5" fill="#fff" stroke="#00ff00"/><path d="M1168.5 294V303" stroke="#00ff00"/><rect x="1167.5" y="296.5" width="2" height="4" fill="#000" stroke="#00ff00"/><path d="M1172.5 282V305" stroke="#00ff00"/><rect x="1171.5" y="284.5" width="2" height="13" fill="#000" stroke="#00ff00"/><path d="M1176.5 271V290" stroke="#00ff00"/><rect x="1175.5" y="277.5" width="2" height="9" fill="#000" stroke="#00ff00"/><path d="M1180.5 263V279" stroke="#00ff00"/><rect x="1179.5" y="267.5" width="2" height="11" fill="#000" stroke="#00ff00"/><path d="M1184.5 256V273" stroke="#00ff00"/><rect x="1183.5" y="261.5" width="2" height="7" fill="#000" stroke="#00ff00"/><path d="M1188.5 254V268" stroke="#00ff00"/><rect x="1187.5" y="259.5" width="2" height="3" fill="#fff" stroke="#00ff00"/><path d="M1192.5 257V275" stroke="#00ff00"/><rect x="1191.5" y="262.5" width="2" height="5" fill="#fff" stroke="#00ff00"/><path d="M1196.5 257V281" stroke="#00ff00"/><rect x="1195.5" y="257.5" width="2" height="11" fill="#000" stroke="#00ff00"/><path d="M1200.5 247V263" stroke="#00ff00"/><rect x="1199.5" y="256.5" width="2" height="2" fill="#fff" stroke="#00ff00"/><path d="M1204.5 256V275" stroke="#00ff00"/><rect x="1203.5" y="257.5" width="2" height="2" fill="#fff" stroke="#00ff00"/><path d="M1208.5 258V272" stroke="#00ff00"/><rect x="1207.5" y="262.5" width="2" height="5" fill="#fff" stroke="#00ff00"/><path d="M1212.5 251V270" stroke="#00ff00"/><rect x="1211.5" y="252.5" width="2" height="16" fill="#000" stroke="#00ff00"/><path d="M1216.5 251V278" stroke="#00ff00"/><rect x="1215.5" y="252.5" width="2" height="5" fill="#fff" stroke="#00ff00"/><path d="M1220.5 259V274" stroke="#00ff00"/><rect x="1219.5" y="260.5" width="2" height="7" fill="#fff" stroke="#00ff00"/><path d="M1224.5 257V279" stroke="#00ff00"/><rect x="1223.5" y="267.5" width="2" height="1" fill="#000" stroke="#00ff00"/><path d="M1228.5 264V282" stroke="#00ff00"/><rect x="1227.5" y="268.5" width="2" height="7" fill="#fff" stroke="#00ff00"/><path d="M1232.5 267V285" stroke="#00ff00"/><rect x="1231.5" y="272.5" width="2" height="4" fill="#000" stroke="#00ff00"/><path d="M1236.5 273V289" stroke="#00ff00"/><rect x="1235.5" y="276.5" width="2" height="11" fill="#fff" stroke="#00ff00"/><path d="M1240.5 282V304" stroke="#00ff00"/><rect x="1239.5" y="286.5" width="2" height="1" fill="#000" stroke="#00ff00"/><path d="M1244.5 270V300" stroke="#00ff00"/><rect x="1243.5" y="271.5" width="2" height="27" fill="#000" stroke="#00ff00"/><path d="M1248.5 267V288" stroke="#00ff00"/><rect x="1247.5" y="273.5" width="2" height="1" fill="#fff" stroke="#00ff00"/><path d="M1252.5 270V287" stroke="#00ff00"/><rect x="1251.5" y="274.5" width="2" height="2" fill="#000" stroke="#00ff00"/><path d="M1256.5 272V298" stroke="#00ff00"/><rect x="1255.5" y="273.5" width="2" height="11" fill="#fff" stroke="#00ff00"/><path d="M1260.5 284V299" stroke="#00ff00"/><rect x="1259.5" y="286.5" width="2" height="11" fill="#000" stroke="#00ff00"/><path d="M1264.5 283V306" stroke="#00ff00"/><rect x="1263.5" y="284.5" width="2" height="3" fill="#000" stroke="#00ff00"/><path d="M1268.5 281V300" stroke="#00ff00"/><rect x="1267.5" y="284.5" width="2" height="3" fill="#000" stroke="#00ff00"/><path d="M1272.5 275V290" stroke="#00ff00"/><rect x="1271.5" y="277.5" width="2" height="9" fill="#000" stroke="#00ff00"/><path d="M1276.5 266V285" stroke="#00ff00"/><rect x="1275.5" y="269.5" width="2" height="12" fill="#000" stroke="#00ff00"/><path d="M1280.5 257V279" stroke="#00ff00"/><rect x="1279.5" y="261.5" width="2" height="7" fill="#000" stroke="#00ff00"/><path d="M1284.5 257V270" stroke="#00ff00"/><rect x="1283.5" y="259.5" width="2" height="10" fill="#fff" stroke="#00ff00"/><path d="M1288.5 265V273" stroke="#00ff00"/><rect x="1287.5" y="269.5" width="2" height="2" fill="#000" stroke="#00ff00"/><path d="M1292.5 270V293" stroke="#00ff00"/><rect x="1291.5" y="283.5" width="2" height="2" fill="#fff" stroke="#00ff00"/><path d="M1296.5 284V309" stroke="#00ff00"/><rect x="1295.5" y="284.5" width="2" height="9" fill="#fff" stroke="#00ff00"/><path d="M1300.5 291V302" stroke="#00ff00"/><rect x="1299.5" y="293.5" width="2" height="2" fill="#000" stroke="#00ff00"/><path d="M1304.5 291V305" stroke="#00ff00"/><rect x="1303.5" y="294.5" width="2" height="4" fill="#000" stroke="#00ff00"/><path d="M1308.5 291V305" stroke="#00ff00"/><rect x="1307.5" y="292.5" width="2" height="5" fill="#fff" stroke="#00ff00"/><path d="M1312.5 282V299" stroke="#00ff00"/><rect x="1311.5" y="284.5" width="2" height="7" fill="#000" stroke="#00ff00"/><path d="M1316.5 282V293" stroke="#00ff00"/><rect x="1315.5" y="284.5" width="2" height="2" fill="#000" stroke="#00ff00"/><path d="M1320.5 273V290" stroke="#00ff00"/><rect x="1319.5" y="277.5" width="2" height="7" fill="#000" stroke="#00ff00"/><path d="M1324.5 264V284" stroke="#00ff00"/><rect x="1323.5" y="272.5" width="2" height="9" fill="#000" stroke="#00ff00"/><path d="M1328.5 266V287" stroke="#00ff00"/><rect x="1327.5" y="269.5" width="2" height="16" fill="#fff" stroke="#00ff00"/><path d="M1332.5 283V289" stroke="#00ff00"/><rect x="1331.5" y="284.5" width="2" height="2" fill="#000" stroke="#00ff00"/><path d="M1336.5 283V289" stroke="#00ff00"/><rect x="1335.5" y="284.5" width="2" height="4" fill="#fff" stroke="#00ff00"/><path d="M1340.5 283V292" stroke="#00ff00"/><rect x="1339.5" y="286.5" width="2" height="1" fill="#000" stroke="#00ff00"/><path d="M1344.5 284V290" stroke="#00ff00"/><rect x="1343.5" y="286.5" width="2" height="1" fill="#000" stroke="#00ff00"/><path d="M1348.5 284V300" stroke="#00ff00"/><rect x="1347.5" y="289.5" width="2" height="9" fill="#fff" stroke="#00ff00"/><path d="M1352.5 292V300" stroke="#00ff00"/><rect x="1351.5" y="296.5" width="2" height="1" fill="#000" stroke="#00ff00"/><path d="M1356.5 292V299" stroke="#00ff00"/><rect x="1355.5" y="296.5" width="2" height="1" fill="#000" stroke="#00ff00"/><path d="M1360.5 288V300" stroke="#00ff00"/><rect x="1359.5" y="294.5" width="2" height="4" fill="#000" stroke="#00ff00"/><path d="M1364.5 295V310" stroke="#00ff00"/><rect x="1363.5" y="296.5" width="2" height="6" fill="#fff" stroke="#00ff00"/><path d="M1368.5 301V325" stroke="#00ff00"/><rect x="1367.5" y="302.5" width="2" height="20" fill="#fff" stroke="#00ff00"/><path d="M1372.5 318V338" stroke="#00ff00"/><rect x="1371.5" y="318.5" width="2" height="15" fill="#fff" stroke="#00ff00"/><path d="M1376.5 323V345" stroke="#00ff00"/><rect x="1375.5" y="331.5" width="2" height="8" fill="#fff" stroke="#00ff00"/><path d="M1380.5 326V350" stroke="#00ff00"/><rect x="1379.5" y="341.5" width="2" height="7" fill="#fff" stroke="#00ff00"/><path d="M1384.5 343V359" stroke="#00ff00"/><rect x="1383.5" y="344.5" width="2" height="8" fill="#fff" stroke="#00ff00"/><path d="M1388.5 344V359" stroke="#00ff00"/><rect x="1387.5" y="347.5" width="2" height="2" fill="#000" stroke="#00ff00"/><path d="M1392.5 347V367" stroke="#00ff00"/><rect x="1391.5" y="348.5" width="2" height="11" fill="#fff" stroke="#00ff00"/><path d="M1396.5 354V369" stroke="#00ff00"/><rect x="1395.5" y="357.5" width="2" height="3" fill="#fff" stroke="#00ff00"/><path d="M1400.5 345V368" stroke="#00ff00"/><rect x="1399.5" y="345.5" width="2" height="18" fill="#000" stroke="#00ff00"/><path d="M1404.5 344V351" stroke="#00ff00"/><rect x="1403.5" y="346.5" width="2" height="2" fill="#000" stroke="#00ff00"/><path d="M1408.5 333V349" stroke="#00ff00"/><rect x="1407.5" y="336.5" width="2" height="11" fill="#000" stroke="#00ff00"/><path d="M1412.5 317V340" stroke="#00ff00"/><rect x="1411.5" y="319.5" width="2" height="14" fill="#000" stroke="#00ff00"/><path d="M1416.5 298V329" stroke="#00ff00"/><rect x="1415.5" y="301.5" width="2" height="17" fill="#000" stroke="#00ff00"/><path d="M1420.5 295V324" stroke="#00ff00"/><rect x="1419.5" y="304.5" width="2" height="2" fill="#000" stroke="#00ff00"/><path d="M1424.5 291V315" stroke="#00ff00"/><rect x="1423.5" y="303.5" width="2" height="2" fill="#000" stroke="#00ff00"/><path d="M1428.5 298V307" stroke="#00ff00"/><rect x="1427.5" y="301.5" width="2" height="2" fill="#000" stroke="#00ff00"/><path d="M1432.5 298V327" stroke="#00ff00"/><rect x="1431.5" y="303.5" width="2" height="8" fill="#fff" stroke="#00ff00"/><path d="M1436.5 309V333" stroke="#00ff00"/><rect x="1435.5" y="314.5" width="2" height="4" fill="#fff" stroke="#00ff00"/><path d="M1440.5 311V332" stroke="#00ff00"/><rect x="1439.5" y="320.5" width="2" height="3" fill="#fff" stroke="#00ff00"/><path d="M1444.5 317V330" stroke="#00ff00"/><rect x="1443.5" y="318.5" width="2" height="7" fill="#000" stroke="#00ff00"/><path d="M1448.5 309V324" stroke="#00ff00"/><rect x="1447.5" y="318.5" width="2" height="1" fill="#000" stroke="#00ff00"/><path d="M1452.5 312V328" stroke="#00ff00"/><rect x="1451.5" y="318.5" width="2" height="1" fill="#000" stroke="#00ff00"/><path d="M1456.5 313V334" stroke="#00ff00"/><rect x="1455.5" y="319.5" width="2" height="9" fill="#fff" stroke="#00ff00"/><path d="M1460.5 317V333" stroke="#00ff00"/><rect x="1459.5" y="317.5" width="2" height="12" fill="#fff" stroke="#00ff00"/><path d="M1464.5 323V332" stroke="#00ff00"/><rect x="1463.5" y="327.5" width="2" height="3" fill="#fff" stroke="#00ff00"/><path d="M1468.5 323V332" stroke="#00ff00"/><rect x="1467.5" y="325.5" width="2" height="2" fill="#000" stroke="#00ff00"/><path d="M1472.5 323V332" stroke="#00ff00"/><rect x="1471.5" y="325.5" width="2" height="1" fill="#000" stroke="#00ff00"/><path d="M1476.5 322V334" stroke="#00ff00"/><rect x="1475.5" y="326.5" width="2" height="1" fill="#000" stroke="#00ff00"/><path d="M1480.5 318V340" stroke="#00ff00"/><rect x="1479.5" y="326.5" width="2" height="12" fill="#fff" stroke="#00ff00"/><path d="M1484.5 327V343" stroke="#00ff00"/><rect x="1483.5" y="337.5" width="2" height="1" fill="#000" stroke="#00ff00"/><path d="M1488.5 334V368" stroke="#00ff00"/><rect x="1487.5" y="334.5" width="2" height="29" fill="#fff" stroke="#00ff00"/><path d="M1492.5 352V364" stroke="#00ff00"/><rect x="1491.5" y="359.5" width="2" height="2" fill="#000" stroke="#00ff00"/><path d="M1496.5 351V367" stroke="#00ff00"/><rect x="1495.5" y="359.5" width="2" height="2" fill="#000" stroke="#00ff00"/><path d="M1500.5 352V363" stroke="#00ff00"/><rect x="1499.5" y="352.5" width="2" height="7" fill="#000" stroke="#00ff00"/><path d="M1504.5 349V368" stroke="#00ff00"/><rect x="1503.5" y="356.5" width="2" height="7" fill="#fff" stroke="#00ff00"/><path d="M1508.5 345V365" stroke="#00ff00"/><rect x="1507.5" y="360.5" width="2" height="1" fill="#000" stroke="#00ff00"/><path d="M1512.5 351V360" stroke="#00ff00"/><rect x="1511.5" y="356.5" width="2" height="1" fill="#000" stroke="#00ff00"/><path d="M1516.5 350V357" stroke="#00ff00"/><rect x="1515.5" y="352.5" width="2" height="1" fill="#000" stroke="#00ff00"/><path d="M1520.5 335V355" stroke="#00ff00"/><rect x="1519.5" y="341.5" width="2" height="12" fill="#000" stroke="#00ff00"/><path d="M1524.5 333V342" stroke="#00ff00"/><rect x="1523.5" y="338.5" width="2" height="2" fill="#000" stroke="#00ff00"/><path d="M1528.5 332V343" stroke="#00ff00"/><rect x="1527.5" y="337.5" width="2" height="5" fill="#fff" stroke="#00ff00"/><path d="M1532.5 326V343" stroke="#00ff00"/><rect x="1531.5" y="335.5" width="2" height="1" fill="#000" stroke="#00ff00"/><path d="M1536.5 329V402" stroke="#00ff00"/><rect x="1535.5" y="337.5" width="2" height="59" fill="#fff" stroke="#00ff00"/><path d="M1540.5 391V400" stroke="#00ff00"/><rect x="1539.5" y="394.5" width="2" height="1" fill="#000" stroke="#00ff00"/><path d="M303.5 126V407.5H1858.5V126.5H303.5" fill="none" stroke="#fff"/><path d="M1858 175.5H1862" stroke="#fff"/><path d="M1858 228.5H1862" stroke="#fff"/><path d="M1858 280.5H1862" stroke="#fff"/><path d="M1858 332.5H1862" stroke="#fff"/><path d="M1858 385.5H1862" stroke="#fff"/><path d="M304.5 407V411" stroke="#fff"/><path d="M400.5 407V411" stroke="#fff"/><path d="M496.5 407V411" stroke="#fff"/><path d="M592.5 407V411" stroke="#fff"/><path d="M688.5 407V411" stroke="#fff"/><path d="M784.5 407V411" stroke="#fff"/><path d="M880.5 407V411" stroke="#fff"/><path d="M976.5 407V411" stroke="#fff"/><path d="M1072.5 407V411" stroke="#fff"/><path d="M1168.5 407V411" stroke="#fff"/><path d="M1264.5 407V411" stroke="#fff"/><path d="M1360.5 407V411" stroke="#fff"/><path d="M1456.5 407V411" stroke="#fff"/><path d="M1540 127h11l-5.5 5z" fill="#8a9aaa"/></svg><svg class="a" style="left:307px;top:133px" width="9" height="6" viewBox="0 0 9 6"><path d="M0 0H9L4.5 6z" fill="#fff"/></svg><div class="a" style="left:322px;top:130px;font-size:12.5px;line-height:14px;color:#fff;letter-spacing:-0.7px">NZDUSD.,M1</div><div class="a" style="left:401px;top:130px;font-size:12.5px;line-height:14px;color:#fff">0.72203</div><div class="a" style="left:450px;top:130px;font-size:12.5px;line-height:14px;color:#fff">0.72208</div><div class="a" style="left:501px;top:130px;font-size:12.5px;line-height:14px;color:#fff">0.72200</div><div class="a" style="left:550px;top:130px;font-size:12.5px;line-height:14px;color:#fff">0.72204</div><div class="a" style="left:303px;top:412px;font-size:12.5px;line-height:14px;color:#fff">21 Jun 2017</div><div class="a" style="left:399px;top:412px;font-size:12.5px;line-height:14px;color:#fff">21 Jun 12:16</div><div class="a" style="left:495px;top:412px;font-size:12.5px;line-height:14px;color:#fff">21 Jun 12:40</div><div class="a" style="left:591px;top:412px;font-size:12.5px;line-height:14px;color:#fff">21 Jun 13:04</div><div class="a" style="left:687px;top:412px;font-size:12.5px;line-height:14px;color:#fff">21 Jun 13:28</div><div class="a" style="left:783px;top:412px;font-size:12.5px;line-height:14px;color:#fff">21 Jun 13:52</div><div class="a" style="left:879px;top:412px;font-size:12.5px;line-height:14px;color:#fff">21 Jun 14:16</div><div class="a" style="left:975px;top:412px;font-size:12.5px;line-height:14px;color:#fff">21 Jun 14:40</div><div class="a" style="left:1071px;top:412px;font-size:12.5px;line-height:14px;color:#fff">21 Jun 15:04</div><div class="a" style="left:1167px;top:412px;font-size:12.5px;line-height:14px;color:#fff">21 Jun 15:28</div><div class="a" style="left:1263px;top:412px;font-size:12.5px;line-height:14px;color:#fff">21 Jun 15:52</div><div class="a" style="left:1359px;top:412px;font-size:12.5px;line-height:14px;color:#fff">21 Jun 16:16</div><div class="a" style="left:1455px;top:412px;font-size:12.5px;line-height:14px;color:#fff">21 Jun 16:40</div><div class="a" style="left:1865px;top:169px;font-size:12.5px;line-height:14px;color:#fff">0.72455</div><div class="a" style="left:1865px;top:222px;font-size:12.5px;line-height:14px;color:#fff">0.72395</div><div class="a" style="left:1865px;top:274px;font-size:12.5px;line-height:14px;color:#fff">0.72335</div><div class="a" style="left:1865px;top:326px;font-size:12.5px;line-height:14px;color:#fff">0.72275</div><div class="a" style="left:1865px;top:378px;font-size:12.5px;line-height:14px;color:#fff">0.72215</div><div class="a" style="left:1860px;top:363px;width:56px;height:14px;background:#f00"></div><div class="a" style="left:1866px;top:364px;font-size:12.5px;line-height:14px;color:#000">0.72232</div><div class="a" style="left:1860px;top:387px;width:56px;height:14px;background:#fff"></div><div class="a" style="left:1866px;top:388px;font-size:12.5px;line-height:14px;color:#000">0.72204</div><div class="a" style="left:1637px;top:174px;width:32px;height:2px;background:repeating-linear-gradient(90deg,#3a6ee0 0 4px,transparent 4px 5px)"></div><div class="a" style="left:1816px;top:174px;width:32px;height:2px;background:repeating-linear-gradient(90deg,#3a6ee0 0 4px,transparent 4px 5px)"></div><div class="a" style="left:1678px;top:166px;font-size:13px;line-height:15px;color:#4a7ae8;letter-spacing:-0.6px">www.FOREXROBOT.eu</div><div class="a" style="right:72px;top:178px;font-size:14.3px;line-height:15px;color:#ffa500">Margin 3406.38; StopLevel 50.0</div><div class="a" style="right:72px;top:193px;font-size:14.3px;line-height:15px;color:#ffa500">Spread 2.8; TickValue 23.57</div><div class="a" style="right:72px;top:208px;font-size:14.3px;line-height:15px;color:#ffa500">Swap Long -0.50 / Short -4.40</div><div class="a" style="right:72px;top:223px;font-size:14.3px;line-height:15px;color:#ffa500">MinLot 0.1; Leverage 1 : 500</div><div class="a" style="right:72px;top:238px;font-size:14.3px;line-height:15px;color:#ffa500">0x BUY 0.0 / 8x SELL 3.8</div><div class="a" style="right:72px;top:255px;font-size:16px;line-height:17px;color:#ffa500;font-weight:bold;letter-spacing:0.86px">Profit 34903.63 CZK</div><div class="a" style="left:301px;top:431px;width:1619px;height:2px;background:#fff"></div><div class="a" style="left:301px;top:434px;width:1619px;height:24px;background:#f0f0f0"></div><div class="a" style="left:301px;top:433px;width:1619px;height:1px;background:#000"></div><div class="a" style="left:320px;top:437px;font-size:14px;line-height:18px;color:#6d6d6d;letter-spacing:-0.2px">EURUSD.,H4</div><div class="a" style="left:428px;top:437px;font-size:14px;line-height:18px;color:#6d6d6d;letter-spacing:-0.2px">USDCHF.,Daily</div><div class="a" style="left:552px;top:437px;font-size:14px;line-height:18px;color:#6d6d6d;letter-spacing:-0.2px">EURCZK,Weekly</div><div class="a" style="left:683px;top:437px;font-size:14px;line-height:18px;color:#6d6d6d;letter-spacing:-0.2px">GBPUSD.,H4</div><div class="a" style="left:791px;top:437px;font-size:14px;line-height:18px;color:#6d6d6d;letter-spacing:-0.2px">AUDCAD,M5</div><div class="a" style="left:904px;top:437px;font-size:14px;line-height:18px;color:#6d6d6d;letter-spacing:-0.2px">USDCAD.,H4</div><div class="a" style="left:1015px;top:437px;font-size:14px;line-height:18px;color:#6d6d6d;letter-spacing:-0.2px">EURAUD,M5</div><div class="a" style="left:1124px;top:437px;font-size:14px;line-height:18px;color:#6d6d6d;letter-spacing:-0.2px">GBPUSD.,Daily</div><div class="a" style="left:1248px;top:437px;font-size:14px;line-height:18px;color:#6d6d6d;letter-spacing:-0.2px">EURCHF.,H4</div><div class="a" style="left:1355px;top:437px;font-size:14px;line-height:18px;color:#6d6d6d;letter-spacing:-0.2px">USDJPY.,Daily</div><div class="a" style="left:1472px;top:437px;font-size:14px;line-height:18px;color:#6d6d6d;letter-spacing:-0.2px">AUDNZD,H4</div><div class="a" style="left:414px;top:437px;width:1px;height:18px;background:#555"></div><div class="a" style="left:538px;top:437px;width:1px;height:18px;background:#555"></div><div class="a" style="left:669px;top:437px;width:1px;height:18px;background:#555"></div><div class="a" style="left:777px;top:437px;width:1px;height:18px;background:#555"></div><div class="a" style="left:890px;top:437px;width:1px;height:18px;background:#555"></div><div class="a" style="left:1001px;top:437px;width:1px;height:18px;background:#555"></div><div class="a" style="left:1110px;top:437px;width:1px;height:18px;background:#555"></div><div class="a" style="left:1234px;top:437px;width:1px;height:18px;background:#555"></div><div class="a" style="left:1341px;top:437px;width:1px;height:18px;background:#555"></div><div class="a" style="left:1458px;top:437px;width:1px;height:18px;background:#555"></div><div class="a" style="left:301px;top:434px;width:1619px;height:1px;background:#fff"></div><div class="a" style="left:1570px;top:433px;width:117px;height:25px;background:#fff;border:1px solid #000;border-top:none"></div><div class="a" style="left:1571px;top:433px;width:115px;height:1px;background:#fff"></div><div class="a" style="left:1584px;top:437px;font-size:15px;line-height:18px">NZDUSD.,M1</div><svg class="a" style="left:1877px;top:440px" width="8" height="10" viewBox="0 0 8 10"><path d="M7 0v10L1 5z" fill="#a0a0a0"/></svg><svg class="a" style="left:1901px;top:440px" width="8" height="10" viewBox="0 0 8 10"><path d="M1 0v10l6-5z" fill="#a0a0a0"/></svg><div class="a" style="left:300px;top:431px;width:1px;height:27px;background:#a0a0a0"></div><div class="a" style="left:0px;top:459px;width:1920px;height:590px;background:#f0f0f0"></div><svg class="a" style="left:5px;top:466px" width="10" height="8" viewBox="0 0 10 8"><path d="M1 .5L9 7.5M9 .5L1 7.5" stroke="#000" stroke-width="1.3"/></svg><div class="a" style="left:3px;top:481px;width:16px;height:565px;background:#c9d9e8"></div><div class="a" style="left:-16px;top:1010px;width:50px;margin-left:2px;height:16px;transform:rotate(-90deg);font-size:14px;line-height:16px;text-align:center">Terminál</div><div class="a" style="left:20px;top:463px;width:1896px;height:555px;background:#fff;border-top:1px solid #a0a0a0;border-left:1px solid #a0a0a0"></div><div class="a" style="left:21px;top:464px;width:1894px;height:26px;background:#fff"></div><div class="a" style="left:21px;top:490px;width:1894px;height:1px;background:#c8c8c8"></div><div class="a" style="left:207px;top:464px;width:1px;height:26px;background:#e6e6e6"></div><div class="a" style="left:467px;top:464px;width:1px;height:26px;background:#e6e6e6"></div><div class="a" style="left:597px;top:464px;width:1px;height:26px;background:#e6e6e6"></div><div class="a" style="left:698px;top:464px;width:1px;height:26px;background:#e6e6e6"></div><div class="a" style="left:828px;top:464px;width:1px;height:26px;background:#e6e6e6"></div><div class="a" style="left:972px;top:464px;width:1px;height:26px;background:#e6e6e6"></div><div class="a" style="left:1116px;top:464px;width:1px;height:26px;background:#e6e6e6"></div><div class="a" style="left:1260px;top:464px;width:1px;height:26px;background:#e6e6e6"></div><div class="a" style="left:1404px;top:464px;width:1px;height:26px;background:#e6e6e6"></div><div class="a" style="left:1548px;top:464px;width:1px;height:26px;background:#e6e6e6"></div><div class="a" style="left:1692px;top:464px;width:1px;height:26px;background:#e6e6e6"></div><div class="a" style="left:27px;top:469px;font-size:15px;line-height:18px">Pokyn <span style="font-size:10px;color:#777;padding-left:4px">/</span></div><div class="a" style="right:1458px;top:469px;font-size:15px;line-height:18px">Čas</div><div class="a" style="right:1328px;top:469px;font-size:15px;line-height:18px">Typ</div><div class="a" style="right:1227px;top:469px;font-size:15px;line-height:18px">Lotů</div><div class="a" style="right:1097px;top:469px;font-size:15px;line-height:18px">Symbol</div><div class="a" style="right:953px;top:469px;font-size:15px;line-height:18px">Cena</div><div class="a" style="right:809px;top:469px;font-size:15px;line-height:18px">S / L</div><div class="a" style="right:665px;top:469px;font-size:15px;line-height:18px">Realizovat zisk</div><div class="a" style="right:521px;top:469px;font-size:15px;line-height:18px">Cena</div><div class="a" style="right:377px;top:469px;font-size:15px;line-height:18px">Provize</div><div class="a" style="right:233px;top:469px;font-size:15px;line-height:18px">Swap</div><div class="a" style="right:12px;top:469px;font-size:15px;line-height:18px">Zisk</div><div class="a" style="left:21px;top:490px;width:1894px;height:25px;background:#fff"></div><div class="a" style="left:21px;top:490px;width:1894px;height:1px;background:#c8c8c8"></div><div class="a" style="left:206px;top:490px;width:1px;height:25px;background:#c8c8c8"></div><div class="a" style="left:466px;top:490px;width:1px;height:25px;background:#c8c8c8"></div><div class="a" style="left:596px;top:490px;width:1px;height:25px;background:#c8c8c8"></div><div class="a" style="left:697px;top:490px;width:1px;height:25px;background:#c8c8c8"></div><div class="a" style="left:827px;top:490px;width:1px;height:25px;background:#c8c8c8"></div><div class="a" style="left:971px;top:490px;width:1px;height:25px;background:#c8c8c8"></div><div class="a" style="left:1115px;top:490px;width:1px;height:25px;background:#c8c8c8"></div><div class="a" style="left:1259px;top:490px;width:1px;height:25px;background:#c8c8c8"></div><div class="a" style="left:1403px;top:490px;width:1px;height:25px;background:#c8c8c8"></div><div class="a" style="left:1547px;top:490px;width:1px;height:25px;background:#c8c8c8"></div><div class="a" style="left:1691px;top:490px;width:1px;height:25px;background:#c8c8c8"></div><svg class="a" style="left:24px;top:493px" width="20" height="21" viewBox="0 0 20 21"><path d="M2 1.5h8.5l4.5 4.5v11q0 .8-.8.8H2q-.8 0-.8-.8V2.3q0-.8.8-.8z" fill="url(#gdoc)" stroke="#6e6e6e" stroke-width="1.4"/><path d="M10.5 1.5v4.5h4.5z" fill="#555"/><circle cx="13.6" cy="14.8" r="4.3" fill="url(#gblue)"/></svg><div class="a" style="left:48px;top:494px;font-size:14.5px;line-height:18px;letter-spacing:-0.2px">13307227</div><div class="a" style="right:1457px;top:494px;font-size:14.5px;line-height:18px;letter-spacing:-0.35px">2017.06.02 15:38:35</div><div class="a" style="right:1327px;top:494px;font-size:14.5px;line-height:18px">buy</div><div class="a" style="right:1226px;top:494px;font-size:14.5px;line-height:18px">0.11</div><div class="a" style="right:1096px;top:494px;font-size:14.5px;line-height:18px">audnzd</div><div class="a" style="right:952px;top:494px;font-size:14.5px;line-height:18px">1.04163</div><div class="a" style="right:808px;top:494px;font-size:14.5px;line-height:18px">0.00000</div><div class="a" style="right:664px;top:494px;font-size:14.5px;line-height:18px">0.00000</div><div class="a" style="right:520px;top:494px;font-size:14.5px;line-height:18px">1.04563</div><div class="a" style="right:376px;top:494px;font-size:14.5px;line-height:18px">0.00</div><div class="a" style="right:232px;top:494px;font-size:14.5px;line-height:18px">-129.57</div><div class="a" style="right:36px;top:494px;font-size:14.5px;line-height:18px">748.76</div><svg class="a" style="left:1895px;top:497px" width="13" height="13" viewBox="0 0 13 13"><path d="M1 1L12 12M12 1L1 12" stroke="#888" stroke-width="1.8"/></svg><div class="a" style="left:21px;top:515px;width:1894px;height:25px;background:#ebebeb"></div><div class="a" style="left:21px;top:515px;width:1894px;height:1px;background:#c8c8c8"></div><div class="a" style="left:206px;top:515px;width:1px;height:25px;background:#c8c8c8"></div><div class="a" style="left:466px;top:515px;width:1px;height:25px;background:#c8c8c8"></div><div class="a" style="left:596px;top:515px;width:1px;height:25px;background:#c8c8c8"></div><div class="a" style="left:697px;top:515px;width:1px;height:25px;background:#c8c8c8"></div><div class="a" style="left:827px;top:515px;width:1px;height:25px;background:#c8c8c8"></div><div class="a" style="left:971px;top:515px;width:1px;height:25px;background:#c8c8c8"></div><div class="a" style="left:1115px;top:515px;width:1px;height:25px;background:#c8c8c8"></div><div class="a" style="left:1259px;top:515px;width:1px;height:25px;background:#c8c8c8"></div><div class="a" style="left:1403px;top:515px;width:1px;height:25px;background:#c8c8c8"></div><div class="a" style="left:1547px;top:515px;width:1px;height:25px;background:#c8c8c8"></div><div class="a" style="left:1691px;top:515px;width:1px;height:25px;background:#c8c8c8"></div><svg class="a" style="left:24px;top:518px" width="20" height="21" viewBox="0 0 20 21"><path d="M2 1.5h8.5l4.5 4.5v11q0 .8-.8.8H2q-.8 0-.8-.8V2.3q0-.8.8-.8z" fill="url(#gdoc)" stroke="#6e6e6e" stroke-width="1.4"/><path d="M10.5 1.5v4.5h4.5z" fill="#555"/><circle cx="13.6" cy="14.8" r="4.3" fill="url(#gblue)"/></svg><div class="a" style="left:48px;top:519px;font-size:14.5px;line-height:18px;letter-spacing:-0.2px">13311803</div><div class="a" style="right:1457px;top:519px;font-size:14.5px;line-height:18px;letter-spacing:-0.35px">2017.06.06 08:44:06</div><div class="a" style="right:1327px;top:519px;font-size:14.5px;line-height:18px">buy</div><div class="a" style="right:1226px;top:519px;font-size:14.5px;line-height:18px">0.11</div><div class="a" style="right:1096px;top:519px;font-size:14.5px;line-height:18px">audnzd</div><div class="a" style="right:952px;top:519px;font-size:14.5px;line-height:18px">1.04610</div><div class="a" style="right:808px;top:519px;font-size:14.5px;line-height:18px">0.00000</div><div class="a" style="right:664px;top:519px;font-size:14.5px;line-height:18px">0.00000</div><div class="a" style="right:520px;top:519px;font-size:14.5px;line-height:18px">1.04563</div><div class="a" style="right:376px;top:519px;font-size:14.5px;line-height:18px">0.00</div><div class="a" style="right:232px;top:519px;font-size:14.5px;line-height:18px">-114.50</div><div class="a" style="right:36px;top:519px;font-size:14.5px;line-height:18px">-87.98</div><svg class="a" style="left:1895px;top:522px" width="13" height="13" viewBox="0 0 13 13"><path d="M1 1L12 12M12 1L1 12" stroke="#888" stroke-width="1.8"/></svg><div class="a" style="left:21px;top:540px;width:1894px;height:25px;background:#fff"></div><div class="a" style="left:21px;top:540px;width:1894px;height:1px;background:#c8c8c8"></div><div class="a" style="left:206px;top:540px;width:1px;height:25px;background:#c8c8c8"></div><div class="a" style="left:466px;top:540px;width:1px;height:25px;background:#c8c8c8"></div><div class="a" style="left:596px;top:540px;width:1px;height:25px;background:#c8c8c8"></div><div class="a" style="left:697px;top:540px;width:1px;height:25px;background:#c8c8c8"></div><div class="a" style="left:827px;top:540px;width:1px;height:25px;background:#c8c8c8"></div><div class="a" style="left:971px;top:540px;width:1px;height:25px;background:#c8c8c8"></div><div class="a" style="left:1115px;top:540px;width:1px;height:25px;background:#c8c8c8"></div><div class="a" style="left:1259px;top:540px;width:1px;height:25px;background:#c8c8c8"></div><div class="a" style="left:1403px;top:540px;width:1px;height:25px;background:#c8c8c8"></div><div class="a" style="left:1547px;top:540px;width:1px;height:25px;background:#c8c8c8"></div><div class="a" style="left:1691px;top:540px;width:1px;height:25px;background:#c8c8c8"></div><svg class="a" style="left:24px;top:543px" width="20" height="21" viewBox="0 0 20 21"><path d="M2 1.5h8.5l4.5 4.5v11q0 .8-.8.8H2q-.8 0-.8-.8V2.3q0-.8.8-.8z" fill="url(#gdoc)" stroke="#6e6e6e" stroke-width="1.4"/><path d="M10.5 1.5v4.5h4.5z" fill="#555"/><circle cx="13.6" cy="14.8" r="4.3" fill="url(#gblue)"/></svg><div class="a" style="left:48px;top:544px;font-size:14.5px;line-height:18px;letter-spacing:-0.2px">13325419</div><div class="a" style="right:1457px;top:544px;font-size:14.5px;line-height:18px;letter-spacing:-0.35px">2017.06.12 09:59:42</div><div class="a" style="right:1327px;top:544px;font-size:14.5px;line-height:18px">buy</div><div class="a" style="right:1226px;top:544px;font-size:14.5px;line-height:18px">0.22</div><div class="a" style="right:1096px;top:544px;font-size:14.5px;line-height:18px">audnzd</div><div class="a" style="right:952px;top:544px;font-size:14.5px;line-height:18px">1.04890</div><div class="a" style="right:808px;top:544px;font-size:14.5px;line-height:18px">0.00000</div><div class="a" style="right:664px;top:544px;font-size:14.5px;line-height:18px">1.05732</div><div class="a" style="right:520px;top:544px;font-size:14.5px;line-height:18px">1.04563</div><div class="a" style="right:376px;top:544px;font-size:14.5px;line-height:18px">0.00</div><div class="a" style="right:232px;top:544px;font-size:14.5px;line-height:18px">-137.81</div><div class="a" style="right:36px;top:544px;font-size:14.5px;line-height:18px">-1 224.23</div><svg class="a" style="left:1895px;top:547px" width="13" height="13" viewBox="0 0 13 13"><path d="M1 1L12 12M12 1L1 12" stroke="#888" stroke-width="1.8"/></svg><div class="a" style="left:21px;top:565px;width:1894px;height:25px;background:#ebebeb"></div><div class="a" style="left:21px;top:565px;width:1894px;height:1px;background:#c8c8c8"></div><div class="a" style="left:206px;top:565px;width:1px;height:25px;background:#c8c8c8"></div><div class="a" style="left:466px;top:565px;width:1px;height:25px;background:#c8c8c8"></div><div class="a" style="left:596px;top:565px;width:1px;height:25px;background:#c8c8c8"></div><div class="a" style="left:697px;top:565px;width:1px;height:25px;background:#c8c8c8"></div><div class="a" style="left:827px;top:565px;width:1px;height:25px;background:#c8c8c8"></div><div class="a" style="left:971px;top:565px;width:1px;height:25px;background:#c8c8c8"></div><div class="a" style="left:1115px;top:565px;width:1px;height:25px;background:#c8c8c8"></div><div class="a" style="left:1259px;top:565px;width:1px;height:25px;background:#c8c8c8"></div><div class="a" style="left:1403px;top:565px;width:1px;height:25px;background:#c8c8c8"></div><div class="a" style="left:1547px;top:565px;width:1px;height:25px;background:#c8c8c8"></div><div class="a" style="left:1691px;top:565px;width:1px;height:25px;background:#c8c8c8"></div><svg class="a" style="left:24px;top:568px" width="20" height="21" viewBox="0 0 20 21"><path d="M2 1.5h8.5l4.5 4.5v11q0 .8-.8.8H2q-.8 0-.8-.8V2.3q0-.8.8-.8z" fill="url(#gdoc)" stroke="#6e6e6e" stroke-width="1.4"/><path d="M10.5 1.5v4.5h4.5z" fill="#555"/><circle cx="13.6" cy="14.8" r="4.3" fill="url(#gblue)"/></svg><div class="a" style="left:48px;top:569px;font-size:14.5px;line-height:18px;letter-spacing:-0.2px">13328926</div><div class="a" style="right:1457px;top:569px;font-size:14.5px;line-height:18px;letter-spacing:-0.35px">2017.06.13 10:05:46</div><div class="a" style="right:1327px;top:569px;font-size:14.5px;line-height:18px">buy</div><div class="a" style="right:1226px;top:569px;font-size:14.5px;line-height:18px">0.10</div><div class="a" style="right:1096px;top:569px;font-size:14.5px;line-height:18px">euraud</div><div class="a" style="right:952px;top:569px;font-size:14.5px;line-height:18px">1.48388</div><div class="a" style="right:808px;top:569px;font-size:14.5px;line-height:18px">1.45904</div><div class="a" style="right:664px;top:569px;font-size:14.5px;line-height:18px">1.48752</div><div class="a" style="right:520px;top:569px;font-size:14.5px;line-height:18px">1.47365</div><div class="a" style="right:376px;top:569px;font-size:14.5px;line-height:18px">0.00</div><div class="a" style="right:232px;top:569px;font-size:14.5px;line-height:18px">-162.49</div><div class="a" style="right:36px;top:569px;font-size:14.5px;line-height:18px">-1 821.23</div><svg class="a" style="left:1895px;top:572px" width="13" height="13" viewBox="0 0 13 13"><path d="M1 1L12 12M12 1L1 12" stroke="#888" stroke-width="1.8"/></svg><div class="a" style="left:21px;top:590px;width:1894px;height:25px;background:#fff"></div><div class="a" style="left:21px;top:590px;width:1894px;height:1px;background:#c8c8c8"></div><div class="a" style="left:206px;top:590px;width:1px;height:25px;background:#c8c8c8"></div><div class="a" style="left:466px;top:590px;width:1px;height:25px;background:#c8c8c8"></div><div class="a" style="left:596px;top:590px;width:1px;height:25px;background:#c8c8c8"></div><div class="a" style="left:697px;top:590px;width:1px;height:25px;background:#c8c8c8"></div><div class="a" style="left:827px;top:590px;width:1px;height:25px;background:#c8c8c8"></div><div class="a" style="left:971px;top:590px;width:1px;height:25px;background:#c8c8c8"></div><div class="a" style="left:1115px;top:590px;width:1px;height:25px;background:#c8c8c8"></div><div class="a" style="left:1259px;top:590px;width:1px;height:25px;background:#c8c8c8"></div><div class="a" style="left:1403px;top:590px;width:1px;height:25px;background:#c8c8c8"></div><div class="a" style="left:1547px;top:590px;width:1px;height:25px;background:#c8c8c8"></div><div class="a" style="left:1691px;top:590px;width:1px;height:25px;background:#c8c8c8"></div><svg class="a" style="left:24px;top:593px" width="20" height="21" viewBox="0 0 20 21"><path d="M2 1.5h8.5l4.5 4.5v11q0 .8-.8.8H2q-.8 0-.8-.8V2.3q0-.8.8-.8z" fill="url(#gdoc)" stroke="#6e6e6e" stroke-width="1.4"/><path d="M10.5 1.5v4.5h4.5z" fill="#555"/><circle cx="13.6" cy="14.8" r="4.3" fill="url(#gblue)"/></svg><div class="a" style="left:48px;top:594px;font-size:14.5px;line-height:18px;letter-spacing:-0.2px">13332205</div><div class="a" style="right:1457px;top:594px;font-size:14.5px;line-height:18px;letter-spacing:-0.35px">2017.06.14 11:21:02</div><div class="a" style="right:1327px;top:594px;font-size:14.5px;line-height:18px">buy</div><div class="a" style="right:1226px;top:594px;font-size:14.5px;line-height:18px">0.11</div><div class="a" style="right:1096px;top:594px;font-size:14.5px;line-height:18px">euraud</div><div class="a" style="right:952px;top:594px;font-size:14.5px;line-height:18px">1.48007</div><div class="a" style="right:808px;top:594px;font-size:14.5px;line-height:18px">1.44212</div><div class="a" style="right:664px;top:594px;font-size:14.5px;line-height:18px">1.48752</div><div class="a" style="right:520px;top:594px;font-size:14.5px;line-height:18px">1.47365</div><div class="a" style="right:376px;top:594px;font-size:14.5px;line-height:18px">0.00</div><div class="a" style="right:232px;top:594px;font-size:14.5px;line-height:18px">-156.60</div><div class="a" style="right:36px;top:594px;font-size:14.5px;line-height:18px">-1 257.24</div><svg class="a" style="left:1895px;top:597px" width="13" height="13" viewBox="0 0 13 13"><path d="M1 1L12 12M12 1L1 12" stroke="#888" stroke-width="1.8"/></svg><div class="a" style="left:21px;top:615px;width:1894px;height:25px;background:#ebebeb"></div><div class="a" style="left:21px;top:615px;width:1894px;height:1px;background:#c8c8c8"></div><div class="a" style="left:206px;top:615px;width:1px;height:25px;background:#c8c8c8"></div><div class="a" style="left:466px;top:615px;width:1px;height:25px;background:#c8c8c8"></div><div class="a" style="left:596px;top:615px;width:1px;height:25px;background:#c8c8c8"></div><div class="a" style="left:697px;top:615px;width:1px;height:25px;background:#c8c8c8"></div><div class="a" style="left:827px;top:615px;width:1px;height:25px;background:#c8c8c8"></div><div class="a" style="left:971px;top:615px;width:1px;height:25px;background:#c8c8c8"></div><div class="a" style="left:1115px;top:615px;width:1px;height:25px;background:#c8c8c8"></div><div class="a" style="left:1259px;top:615px;width:1px;height:25px;background:#c8c8c8"></div><div class="a" style="left:1403px;top:615px;width:1px;height:25px;background:#c8c8c8"></div><div class="a" style="left:1547px;top:615px;width:1px;height:25px;background:#c8c8c8"></div><div class="a" style="left:1691px;top:615px;width:1px;height:25px;background:#c8c8c8"></div><svg class="a" style="left:24px;top:618px" width="20" height="21" viewBox="0 0 20 21"><path d="M2 1.5h8.5l4.5 4.5v11q0 .8-.8.8H2q-.8 0-.8-.8V2.3q0-.8.8-.8z" fill="url(#gdoc)" stroke="#6e6e6e" stroke-width="1.4"/><path d="M10.5 1.5v4.5h4.5z" fill="#555"/><circle cx="13.6" cy="14.8" r="4.3" fill="url(#gred)"/></svg><div class="a" style="left:48px;top:619px;font-size:14.5px;line-height:18px;letter-spacing:-0.2px">13333242</div><div class="a" style="right:1457px;top:619px;font-size:14.5px;line-height:18px;letter-spacing:-0.35px">2017.06.14 15:37:36</div><div class="a" style="right:1327px;top:619px;font-size:14.5px;line-height:18px">sell</div><div class="a" style="right:1226px;top:619px;font-size:14.5px;line-height:18px">0.33</div><div class="a" style="right:1096px;top:619px;font-size:14.5px;line-height:18px">nzdusd.</div><div class="a" style="right:952px;top:619px;font-size:14.5px;line-height:18px">0.72770</div><div class="a" style="right:808px;top:619px;font-size:14.5px;line-height:18px">0.73999</div><div class="a" style="right:664px;top:619px;font-size:14.5px;line-height:18px">0.71814</div><div class="a" style="right:520px;top:619px;font-size:14.5px;line-height:18px">0.72232</div><div class="a" style="right:376px;top:619px;font-size:14.5px;line-height:18px">0.00</div><div class="a" style="right:232px;top:619px;font-size:14.5px;line-height:18px">-238.00</div><div class="a" style="right:36px;top:619px;font-size:14.5px;line-height:18px">4 189.77</div><svg class="a" style="left:1895px;top:622px" width="13" height="13" viewBox="0 0 13 13"><path d="M1 1L12 12M12 1L1 12" stroke="#888" stroke-width="1.8"/></svg><div class="a" style="left:21px;top:640px;width:1894px;height:25px;background:#fff"></div><div class="a" style="left:21px;top:640px;width:1894px;height:1px;background:#c8c8c8"></div><div class="a" style="left:206px;top:640px;width:1px;height:25px;background:#c8c8c8"></div><div class="a" style="left:466px;top:640px;width:1px;height:25px;background:#c8c8c8"></div><div class="a" style="left:596px;top:640px;width:1px;height:25px;background:#c8c8c8"></div><div class="a" style="left:697px;top:640px;width:1px;height:25px;background:#c8c8c8"></div><div class="a" style="left:827px;top:640px;width:1px;height:25px;background:#c8c8c8"></div><div class="a" style="left:971px;top:640px;width:1px;height:25px;background:#c8c8c8"></div><div class="a" style="left:1115px;top:640px;width:1px;height:25px;background:#c8c8c8"></div><div class="a" style="left:1259px;top:640px;width:1px;height:25px;background:#c8c8c8"></div><div class="a" style="left:1403px;top:640px;width:1px;height:25px;background:#c8c8c8"></div><div class="a" style="left:1547px;top:640px;width:1px;height:25px;background:#c8c8c8"></div><div class="a" style="left:1691px;top:640px;width:1px;height:25px;background:#c8c8c8"></div><svg class="a" style="left:24px;top:643px" width="20" height="21" viewBox="0 0 20 21"><path d="M2 1.5h8.5l4.5 4.5v11q0 .8-.8.8H2q-.8 0-.8-.8V2.3q0-.8.8-.8z" fill="url(#gdoc)" stroke="#6e6e6e" stroke-width="1.4"/><path d="M10.5 1.5v4.5h4.5z" fill="#555"/><circle cx="13.6" cy="14.8" r="4.3" fill="url(#gred)"/></svg><div class="a" style="left:48px;top:644px;font-size:14.5px;line-height:18px;letter-spacing:-0.2px">13333476</div><div class="a" style="right:1457px;top:644px;font-size:14.5px;line-height:18px;letter-spacing:-0.35px">2017.06.14 15:51:36</div><div class="a" style="right:1327px;top:644px;font-size:14.5px;line-height:18px">sell</div><div class="a" style="right:1226px;top:644px;font-size:14.5px;line-height:18px">0.44</div><div class="a" style="right:1096px;top:644px;font-size:14.5px;line-height:18px">nzdusd.</div><div class="a" style="right:952px;top:644px;font-size:14.5px;line-height:18px">0.72906</div><div class="a" style="right:808px;top:644px;font-size:14.5px;line-height:18px">0.73957</div><div class="a" style="right:664px;top:644px;font-size:14.5px;line-height:18px">0.71483</div><div class="a" style="right:520px;top:644px;font-size:14.5px;line-height:18px">0.72232</div><div class="a" style="right:376px;top:644px;font-size:14.5px;line-height:18px">0.00</div><div class="a" style="right:232px;top:644px;font-size:14.5px;line-height:18px">-317.33</div><div class="a" style="right:36px;top:644px;font-size:14.5px;line-height:18px">6 998.52</div><svg class="a" style="left:1895px;top:647px" width="13" height="13" viewBox="0 0 13 13"><path d="M1 1L12 12M12 1L1 12" stroke="#888" stroke-width="1.8"/></svg><div class="a" style="left:21px;top:665px;width:1894px;height:25px;background:#ebebeb"></div><div class="a" style="left:21px;top:665px;width:1894px;height:1px;background:#c8c8c8"></div><div class="a" style="left:206px;top:665px;width:1px;height:25px;background:#c8c8c8"></div><div class="a" style="left:466px;top:665px;width:1px;height:25px;background:#c8c8c8"></div><div class="a" style="left:596px;top:665px;width:1px;height:25px;background:#c8c8c8"></div><div class="a" style="left:697px;top:665px;width:1px;height:25px;background:#c8c8c8"></div><div class="a" style="left:827px;top:665px;width:1px;height:25px;background:#c8c8c8"></div><div class="a" style="left:971px;top:665px;width:1px;height:25px;background:#c8c8c8"></div><div class="a" style="left:1115px;top:665px;width:1px;height:25px;background:#c8c8c8"></div><div class="a" style="left:1259px;top:665px;width:1px;height:25px;background:#c8c8c8"></div><div class="a" style="left:1403px;top:665px;width:1px;height:25px;background:#c8c8c8"></div><div class="a" style="left:1547px;top:665px;width:1px;height:25px;background:#c8c8c8"></div><div class="a" style="left:1691px;top:665px;width:1px;height:25px;background:#c8c8c8"></div><svg class="a" style="left:24px;top:668px" width="20" height="21" viewBox="0 0 20 21"><path d="M2 1.5h8.5l4.5 4.5v11q0 .8-.8.8H2q-.8 0-.8-.8V2.3q0-.8.8-.8z" fill="url(#gdoc)" stroke="#6e6e6e" stroke-width="1.4"/><path d="M10.5 1.5v4.5h4.5z" fill="#555"/><circle cx="13.6" cy="14.8" r="4.3" fill="url(#gblue)"/></svg><div class="a" style="left:48px;top:669px;font-size:14.5px;line-height:18px;letter-spacing:-0.2px">13336772</div><div class="a" style="right:1457px;top:669px;font-size:14.5px;line-height:18px;letter-spacing:-0.35px">2017.06.15 08:41:10</div><div class="a" style="right:1327px;top:669px;font-size:14.5px;line-height:18px">buy</div><div class="a" style="right:1226px;top:669px;font-size:14.5px;line-height:18px">0.10</div><div class="a" style="right:1096px;top:669px;font-size:14.5px;line-height:18px">euraud</div><div class="a" style="right:952px;top:669px;font-size:14.5px;line-height:18px">1.47401</div><div class="a" style="right:808px;top:669px;font-size:14.5px;line-height:18px">0.00000</div><div class="a" style="right:664px;top:669px;font-size:14.5px;line-height:18px">0.00000</div><div class="a" style="right:520px;top:669px;font-size:14.5px;line-height:18px">1.47365</div><div class="a" style="right:376px;top:669px;font-size:14.5px;line-height:18px">0.00</div><div class="a" style="right:232px;top:669px;font-size:14.5px;line-height:18px">-81.69</div><div class="a" style="right:36px;top:669px;font-size:14.5px;line-height:18px">-64.09</div><svg class="a" style="left:1895px;top:672px" width="13" height="13" viewBox="0 0 13 13"><path d="M1 1L12 12M12 1L1 12" stroke="#888" stroke-width="1.8"/></svg><div class="a" style="left:21px;top:690px;width:1894px;height:25px;background:#fff"></div><div class="a" style="left:21px;top:690px;width:1894px;height:1px;background:#c8c8c8"></div><div class="a" style="left:206px;top:690px;width:1px;height:25px;background:#c8c8c8"></div><div class="a" style="left:466px;top:690px;width:1px;height:25px;background:#c8c8c8"></div><div class="a" style="left:596px;top:690px;width:1px;height:25px;background:#c8c8c8"></div><div class="a" style="left:697px;top:690px;width:1px;height:25px;background:#c8c8c8"></div><div class="a" style="left:827px;top:690px;width:1px;height:25px;background:#c8c8c8"></div><div class="a" style="left:971px;top:690px;width:1px;height:25px;background:#c8c8c8"></div><div class="a" style="left:1115px;top:690px;width:1px;height:25px;background:#c8c8c8"></div><div class="a" style="left:1259px;top:690px;width:1px;height:25px;background:#c8c8c8"></div><div class="a" style="left:1403px;top:690px;width:1px;height:25px;background:#c8c8c8"></div><div class="a" style="left:1547px;top:690px;width:1px;height:25px;background:#c8c8c8"></div><div class="a" style="left:1691px;top:690px;width:1px;height:25px;background:#c8c8c8"></div><svg class="a" style="left:24px;top:693px" width="20" height="21" viewBox="0 0 20 21"><path d="M2 1.5h8.5l4.5 4.5v11q0 .8-.8.8H2q-.8 0-.8-.8V2.3q0-.8.8-.8z" fill="url(#gdoc)" stroke="#6e6e6e" stroke-width="1.4"/><path d="M10.5 1.5v4.5h4.5z" fill="#555"/><circle cx="13.6" cy="14.8" r="4.3" fill="url(#gblue)"/></svg><div class="a" style="left:48px;top:694px;font-size:14.5px;line-height:18px;letter-spacing:-0.2px">13337896</div><div class="a" style="right:1457px;top:694px;font-size:14.5px;line-height:18px;letter-spacing:-0.35px">2017.06.15 12:29:29</div><div class="a" style="right:1327px;top:694px;font-size:14.5px;line-height:18px">buy</div><div class="a" style="right:1226px;top:694px;font-size:14.5px;line-height:18px">0.33</div><div class="a" style="right:1096px;top:694px;font-size:14.5px;line-height:18px">audnzd</div><div class="a" style="right:952px;top:694px;font-size:14.5px;line-height:18px">1.05242</div><div class="a" style="right:808px;top:694px;font-size:14.5px;line-height:18px">0.00000</div><div class="a" style="right:664px;top:694px;font-size:14.5px;line-height:18px">1.05476</div><div class="a" style="right:520px;top:694px;font-size:14.5px;line-height:18px">1.04563</div><div class="a" style="right:376px;top:694px;font-size:14.5px;line-height:18px">0.00</div><div class="a" style="right:232px;top:694px;font-size:14.5px;line-height:18px">-92.15</div><div class="a" style="right:36px;top:694px;font-size:14.5px;line-height:18px">-3 813.07</div><svg class="a" style="left:1895px;top:697px" width="13" height="13" viewBox="0 0 13 13"><path d="M1 1L12 12M12 1L1 12" stroke="#888" stroke-width="1.8"/></svg><div class="a" style="left:21px;top:715px;width:1894px;height:25px;background:#ebebeb"></div><div class="a" style="left:21px;top:715px;width:1894px;height:1px;background:#c8c8c8"></div><div class="a" style="left:206px;top:715px;width:1px;height:25px;background:#c8c8c8"></div><div class="a" style="left:466px;top:715px;width:1px;height:25px;background:#c8c8c8"></div><div class="a" style="left:596px;top:715px;width:1px;height:25px;background:#c8c8c8"></div><div class="a" style="left:697px;top:715px;width:1px;height:25px;background:#c8c8c8"></div><div class="a" style="left:827px;top:715px;width:1px;height:25px;background:#c8c8c8"></div><div class="a" style="left:971px;top:715px;width:1px;height:25px;background:#c8c8c8"></div><div class="a" style="left:1115px;top:715px;width:1px;height:25px;background:#c8c8c8"></div><div class="a" style="left:1259px;top:715px;width:1px;height:25px;background:#c8c8c8"></div><div class="a" style="left:1403px;top:715px;width:1px;height:25px;background:#c8c8c8"></div><div class="a" style="left:1547px;top:715px;width:1px;height:25px;background:#c8c8c8"></div><div class="a" style="left:1691px;top:715px;width:1px;height:25px;background:#c8c8c8"></div><svg class="a" style="left:24px;top:718px" width="20" height="21" viewBox="0 0 20 21"><path d="M2 1.5h8.5l4.5 4.5v11q0 .8-.8.8H2q-.8 0-.8-.8V2.3q0-.8.8-.8z" fill="url(#gdoc)" stroke="#6e6e6e" stroke-width="1.4"/><path d="M10.5 1.5v4.5h4.5z" fill="#555"/><circle cx="13.6" cy="14.8" r="4.3" fill="url(#gred)"/></svg><div class="a" style="left:48px;top:719px;font-size:14.5px;line-height:18px;letter-spacing:-0.2px">13341473</div><div class="a" style="right:1457px;top:719px;font-size:14.5px;line-height:18px;letter-spacing:-0.35px">2017.06.16 09:36:14</div><div class="a" style="right:1327px;top:719px;font-size:14.5px;line-height:18px">sell</div><div class="a" style="right:1226px;top:719px;font-size:14.5px;line-height:18px">0.11</div><div class="a" style="right:1096px;top:719px;font-size:14.5px;line-height:18px">nzdusd.</div><div class="a" style="right:952px;top:719px;font-size:14.5px;line-height:18px">0.72210</div><div class="a" style="right:808px;top:719px;font-size:14.5px;line-height:18px">0.00000</div><div class="a" style="right:664px;top:719px;font-size:14.5px;line-height:18px">0.72052</div><div class="a" style="right:520px;top:719px;font-size:14.5px;line-height:18px">0.72232</div><div class="a" style="right:376px;top:719px;font-size:14.5px;line-height:18px">0.00</div><div class="a" style="right:232px;top:719px;font-size:14.5px;line-height:18px">-34.10</div><div class="a" style="right:36px;top:719px;font-size:14.5px;line-height:18px">-57.11</div><svg class="a" style="left:1895px;top:722px" width="13" height="13" viewBox="0 0 13 13"><path d="M1 1L12 12M12 1L1 12" stroke="#888" stroke-width="1.8"/></svg><div class="a" style="left:21px;top:740px;width:1894px;height:25px;background:#fff"></div><div class="a" style="left:21px;top:740px;width:1894px;height:1px;background:#c8c8c8"></div><div class="a" style="left:206px;top:740px;width:1px;height:25px;background:#c8c8c8"></div><div class="a" style="left:466px;top:740px;width:1px;height:25px;background:#c8c8c8"></div><div class="a" style="left:596px;top:740px;width:1px;height:25px;background:#c8c8c8"></div><div class="a" style="left:697px;top:740px;width:1px;height:25px;background:#c8c8c8"></div><div class="a" style="left:827px;top:740px;width:1px;height:25px;background:#c8c8c8"></div><div class="a" style="left:971px;top:740px;width:1px;height:25px;background:#c8c8c8"></div><div class="a" style="left:1115px;top:740px;width:1px;height:25px;background:#c8c8c8"></div><div class="a" style="left:1259px;top:740px;width:1px;height:25px;background:#c8c8c8"></div><div class="a" style="left:1403px;top:740px;width:1px;height:25px;background:#c8c8c8"></div><div class="a" style="left:1547px;top:740px;width:1px;height:25px;background:#c8c8c8"></div><div class="a" style="left:1691px;top:740px;width:1px;height:25px;background:#c8c8c8"></div><svg class="a" style="left:24px;top:743px" width="20" height="21" viewBox="0 0 20 21"><path d="M2 1.5h8.5l4.5 4.5v11q0 .8-.8.8H2q-.8 0-.8-.8V2.3q0-.8.8-.8z" fill="url(#gdoc)" stroke="#6e6e6e" stroke-width="1.4"/><path d="M10.5 1.5v4.5h4.5z" fill="#555"/><circle cx="13.6" cy="14.8" r="4.3" fill="url(#gblue)"/></svg><div class="a" style="left:48px;top:744px;font-size:14.5px;line-height:18px;letter-spacing:-0.2px">13342392</div><div class="a" style="right:1457px;top:744px;font-size:14.5px;line-height:18px;letter-spacing:-0.35px">2017.06.16 13:39:42</div><div class="a" style="right:1327px;top:744px;font-size:14.5px;line-height:18px">buy</div><div class="a" style="right:1226px;top:744px;font-size:14.5px;line-height:18px">0.33</div><div class="a" style="right:1096px;top:744px;font-size:14.5px;line-height:18px">euraud</div><div class="a" style="right:952px;top:744px;font-size:14.5px;line-height:18px">1.46959</div><div class="a" style="right:808px;top:744px;font-size:14.5px;line-height:18px">1.44130</div><div class="a" style="right:664px;top:744px;font-size:14.5px;line-height:18px">1.47790</div><div class="a" style="right:520px;top:744px;font-size:14.5px;line-height:18px">1.47365</div><div class="a" style="right:376px;top:744px;font-size:14.5px;line-height:18px">0.00</div><div class="a" style="right:232px;top:744px;font-size:14.5px;line-height:18px">-202.18</div><div class="a" style="right:36px;top:744px;font-size:14.5px;line-height:18px">2 385.22</div><svg class="a" style="left:1895px;top:747px" width="13" height="13" viewBox="0 0 13 13"><path d="M1 1L12 12M12 1L1 12" stroke="#888" stroke-width="1.8"/></svg><div class="a" style="left:21px;top:765px;width:1894px;height:25px;background:#ebebeb"></div><div class="a" style="left:21px;top:765px;width:1894px;height:1px;background:#c8c8c8"></div><div class="a" style="left:206px;top:765px;width:1px;height:25px;background:#c8c8c8"></div><div class="a" style="left:466px;top:765px;width:1px;height:25px;background:#c8c8c8"></div><div class="a" style="left:596px;top:765px;width:1px;height:25px;background:#c8c8c8"></div><div class="a" style="left:697px;top:765px;width:1px;height:25px;background:#c8c8c8"></div><div class="a" style="left:827px;top:765px;width:1px;height:25px;background:#c8c8c8"></div><div class="a" style="left:971px;top:765px;width:1px;height:25px;background:#c8c8c8"></div><div class="a" style="left:1115px;top:765px;width:1px;height:25px;background:#c8c8c8"></div><div class="a" style="left:1259px;top:765px;width:1px;height:25px;background:#c8c8c8"></div><div class="a" style="left:1403px;top:765px;width:1px;height:25px;background:#c8c8c8"></div><div class="a" style="left:1547px;top:765px;width:1px;height:25px;background:#c8c8c8"></div><div class="a" style="left:1691px;top:765px;width:1px;height:25px;background:#c8c8c8"></div><svg class="a" style="left:24px;top:768px" width="20" height="21" viewBox="0 0 20 21"><path d="M2 1.5h8.5l4.5 4.5v11q0 .8-.8.8H2q-.8 0-.8-.8V2.3q0-.8.8-.8z" fill="url(#gdoc)" stroke="#6e6e6e" stroke-width="1.4"/><path d="M10.5 1.5v4.5h4.5z" fill="#555"/><circle cx="13.6" cy="14.8" r="4.3" fill="url(#gred)"/></svg><div class="a" style="left:48px;top:769px;font-size:14.5px;line-height:18px;letter-spacing:-0.2px">13342923</div><div class="a" style="right:1457px;top:769px;font-size:14.5px;line-height:18px;letter-spacing:-0.35px">2017.06.16 16:20:37</div><div class="a" style="right:1327px;top:769px;font-size:14.5px;line-height:18px">sell</div><div class="a" style="right:1226px;top:769px;font-size:14.5px;line-height:18px">0.55</div><div class="a" style="right:1096px;top:769px;font-size:14.5px;line-height:18px">nzdusd.</div><div class="a" style="right:952px;top:769px;font-size:14.5px;line-height:18px">0.72399</div><div class="a" style="right:808px;top:769px;font-size:14.5px;line-height:18px">0.73918</div><div class="a" style="right:664px;top:769px;font-size:14.5px;line-height:18px">0.71638</div><div class="a" style="right:520px;top:769px;font-size:14.5px;line-height:18px">0.72232</div><div class="a" style="right:376px;top:769px;font-size:14.5px;line-height:18px">0.00</div><div class="a" style="right:232px;top:769px;font-size:14.5px;line-height:18px">-170.45</div><div class="a" style="right:36px;top:769px;font-size:14.5px;line-height:18px">2 167.57</div><svg class="a" style="left:1895px;top:772px" width="13" height="13" viewBox="0 0 13 13"><path d="M1 1L12 12M12 1L1 12" stroke="#888" stroke-width="1.8"/></svg><div class="a" style="left:21px;top:790px;width:1894px;height:25px;background:#fff"></div><div class="a" style="left:21px;top:790px;width:1894px;height:1px;background:#c8c8c8"></div><div class="a" style="left:206px;top:790px;width:1px;height:25px;background:#c8c8c8"></div><div class="a" style="left:466px;top:790px;width:1px;height:25px;background:#c8c8c8"></div><div class="a" style="left:596px;top:790px;width:1px;height:25px;background:#c8c8c8"></div><div class="a" style="left:697px;top:790px;width:1px;height:25px;background:#c8c8c8"></div><div class="a" style="left:827px;top:790px;width:1px;height:25px;background:#c8c8c8"></div><div class="a" style="left:971px;top:790px;width:1px;height:25px;background:#c8c8c8"></div><div class="a" style="left:1115px;top:790px;width:1px;height:25px;background:#c8c8c8"></div><div class="a" style="left:1259px;top:790px;width:1px;height:25px;background:#c8c8c8"></div><div class="a" style="left:1403px;top:790px;width:1px;height:25px;background:#c8c8c8"></div><div class="a" style="left:1547px;top:790px;width:1px;height:25px;background:#c8c8c8"></div><div class="a" style="left:1691px;top:790px;width:1px;height:25px;background:#c8c8c8"></div><svg class="a" style="left:24px;top:793px" width="20" height="21" viewBox="0 0 20 21"><path d="M2 1.5h8.5l4.5 4.5v11q0 .8-.8.8H2q-.8 0-.8-.8V2.3q0-.8.8-.8z" fill="url(#gdoc)" stroke="#6e6e6e" stroke-width="1.4"/><path d="M10.5 1.5v4.5h4.5z" fill="#555"/><circle cx="13.6" cy="14.8" r="4.3" fill="url(#gred)"/></svg><div class="a" style="left:48px;top:794px;font-size:14.5px;line-height:18px;letter-spacing:-0.2px">13344529</div><div class="a" style="right:1457px;top:794px;font-size:14.5px;line-height:18px;letter-spacing:-0.35px">2017.06.19 09:14:19</div><div class="a" style="right:1327px;top:794px;font-size:14.5px;line-height:18px">sell</div><div class="a" style="right:1226px;top:794px;font-size:14.5px;line-height:18px">0.66</div><div class="a" style="right:1096px;top:794px;font-size:14.5px;line-height:18px">nzdusd.</div><div class="a" style="right:952px;top:794px;font-size:14.5px;line-height:18px">0.72679</div><div class="a" style="right:808px;top:794px;font-size:14.5px;line-height:18px">0.73296</div><div class="a" style="right:664px;top:794px;font-size:14.5px;line-height:18px">0.00000</div><div class="a" style="right:520px;top:794px;font-size:14.5px;line-height:18px">0.72232</div><div class="a" style="right:376px;top:794px;font-size:14.5px;line-height:18px">0.00</div><div class="a" style="right:232px;top:794px;font-size:14.5px;line-height:18px">-136.70</div><div class="a" style="right:36px;top:794px;font-size:14.5px;line-height:18px">6 962.18</div><svg class="a" style="left:1895px;top:797px" width="13" height="13" viewBox="0 0 13 13"><path d="M1 1L12 12M12 1L1 12" stroke="#888" stroke-width="1.8"/></svg><div class="a" style="left:21px;top:815px;width:1894px;height:25px;background:#ebebeb"></div><div class="a" style="left:21px;top:815px;width:1894px;height:1px;background:#c8c8c8"></div><div class="a" style="left:206px;top:815px;width:1px;height:25px;background:#c8c8c8"></div><div class="a" style="left:466px;top:815px;width:1px;height:25px;background:#c8c8c8"></div><div class="a" style="left:596px;top:815px;width:1px;height:25px;background:#c8c8c8"></div><div class="a" style="left:697px;top:815px;width:1px;height:25px;background:#c8c8c8"></div><div class="a" style="left:827px;top:815px;width:1px;height:25px;background:#c8c8c8"></div><div class="a" style="left:971px;top:815px;width:1px;height:25px;background:#c8c8c8"></div><div class="a" style="left:1115px;top:815px;width:1px;height:25px;background:#c8c8c8"></div><div class="a" style="left:1259px;top:815px;width:1px;height:25px;background:#c8c8c8"></div><div class="a" style="left:1403px;top:815px;width:1px;height:25px;background:#c8c8c8"></div><div class="a" style="left:1547px;top:815px;width:1px;height:25px;background:#c8c8c8"></div><div class="a" style="left:1691px;top:815px;width:1px;height:25px;background:#c8c8c8"></div><svg class="a" style="left:24px;top:818px" width="20" height="21" viewBox="0 0 20 21"><path d="M2 1.5h8.5l4.5 4.5v11q0 .8-.8.8H2q-.8 0-.8-.8V2.3q0-.8.8-.8z" fill="url(#gdoc)" stroke="#6e6e6e" stroke-width="1.4"/><path d="M10.5 1.5v4.5h4.5z" fill="#555"/><circle cx="13.6" cy="14.8" r="4.3" fill="url(#gred)"/></svg><div class="a" style="left:48px;top:819px;font-size:14.5px;line-height:18px;letter-spacing:-0.2px">13344540</div><div class="a" style="right:1457px;top:819px;font-size:14.5px;line-height:18px;letter-spacing:-0.35px">2017.06.19 09:16:04</div><div class="a" style="right:1327px;top:819px;font-size:14.5px;line-height:18px">sell</div><div class="a" style="right:1226px;top:819px;font-size:14.5px;line-height:18px">1.11</div><div class="a" style="right:1096px;top:819px;font-size:14.5px;line-height:18px">nzdusd.</div><div class="a" style="right:952px;top:819px;font-size:14.5px;line-height:18px">0.72670</div><div class="a" style="right:808px;top:819px;font-size:14.5px;line-height:18px">0.73291</div><div class="a" style="right:664px;top:819px;font-size:14.5px;line-height:18px">0.71234</div><div class="a" style="right:520px;top:819px;font-size:14.5px;line-height:18px">0.72232</div><div class="a" style="right:376px;top:819px;font-size:14.5px;line-height:18px">0.00</div><div class="a" style="right:232px;top:819px;font-size:14.5px;line-height:18px">-229.91</div><div class="a" style="right:36px;top:819px;font-size:14.5px;line-height:18px">11 473.37</div><svg class="a" style="left:1895px;top:822px" width="13" height="13" viewBox="0 0 13 13"><path d="M1 1L12 12M12 1L1 12" stroke="#888" stroke-width="1.8"/></svg><div class="a" style="left:21px;top:840px;width:1894px;height:25px;background:#fff"></div><div class="a" style="left:21px;top:840px;width:1894px;height:1px;background:#c8c8c8"></div><div class="a" style="left:206px;top:840px;width:1px;height:25px;background:#c8c8c8"></div><div class="a" style="left:466px;top:840px;width:1px;height:25px;background:#c8c8c8"></div><div class="a" style="left:596px;top:840px;width:1px;height:25px;background:#c8c8c8"></div><div class="a" style="left:697px;top:840px;width:1px;height:25px;background:#c8c8c8"></div><div class="a" style="left:827px;top:840px;width:1px;height:25px;background:#c8c8c8"></div><div class="a" style="left:971px;top:840px;width:1px;height:25px;background:#c8c8c8"></div><div class="a" style="left:1115px;top:840px;width:1px;height:25px;background:#c8c8c8"></div><div class="a" style="left:1259px;top:840px;width:1px;height:25px;background:#c8c8c8"></div><div class="a" style="left:1403px;top:840px;width:1px;height:25px;background:#c8c8c8"></div><div class="a" style="left:1547px;top:840px;width:1px;height:25px;background:#c8c8c8"></div><div class="a" style="left:1691px;top:840px;width:1px;height:25px;background:#c8c8c8"></div><svg class="a" style="left:24px;top:843px" width="20" height="21" viewBox="0 0 20 21"><path d="M2 1.5h8.5l4.5 4.5v11q0 .8-.8.8H2q-.8 0-.8-.8V2.3q0-.8.8-.8z" fill="url(#gdoc)" stroke="#6e6e6e" stroke-width="1.4"/><path d="M10.5 1.5v4.5h4.5z" fill="#555"/><circle cx="13.6" cy="14.8" r="4.3" fill="url(#gred)"/></svg><div class="a" style="left:48px;top:844px;font-size:14.5px;line-height:18px;letter-spacing:-0.2px">13345669</div><div class="a" style="right:1457px;top:844px;font-size:14.5px;line-height:18px;letter-spacing:-0.35px">2017.06.19 14:34:28</div><div class="a" style="right:1327px;top:844px;font-size:14.5px;line-height:18px">sell</div><div class="a" style="right:1226px;top:844px;font-size:14.5px;line-height:18px">0.14</div><div class="a" style="right:1096px;top:844px;font-size:14.5px;line-height:18px">nzdusd.</div><div class="a" style="right:952px;top:844px;font-size:14.5px;line-height:18px">0.72524</div><div class="a" style="right:808px;top:844px;font-size:14.5px;line-height:18px">0.72534</div><div class="a" style="right:664px;top:844px;font-size:14.5px;line-height:18px">0.70625</div><div class="a" style="right:520px;top:844px;font-size:14.5px;line-height:18px">0.72232</div><div class="a" style="right:376px;top:844px;font-size:14.5px;line-height:18px">0.00</div><div class="a" style="right:232px;top:844px;font-size:14.5px;line-height:18px">-29.00</div><div class="a" style="right:36px;top:844px;font-size:14.5px;line-height:18px">964.72</div><svg class="a" style="left:1895px;top:847px" width="13" height="13" viewBox="0 0 13 13"><path d="M1 1L12 12M12 1L1 12" stroke="#888" stroke-width="1.8"/></svg><div class="a" style="left:21px;top:865px;width:1894px;height:25px;background:#ebebeb"></div><div class="a" style="left:21px;top:865px;width:1894px;height:1px;background:#c8c8c8"></div><div class="a" style="left:206px;top:865px;width:1px;height:25px;background:#c8c8c8"></div><div class="a" style="left:466px;top:865px;width:1px;height:25px;background:#c8c8c8"></div><div class="a" style="left:596px;top:865px;width:1px;height:25px;background:#c8c8c8"></div><div class="a" style="left:697px;top:865px;width:1px;height:25px;background:#c8c8c8"></div><div class="a" style="left:827px;top:865px;width:1px;height:25px;background:#c8c8c8"></div><div class="a" style="left:971px;top:865px;width:1px;height:25px;background:#c8c8c8"></div><div class="a" style="left:1115px;top:865px;width:1px;height:25px;background:#c8c8c8"></div><div class="a" style="left:1259px;top:865px;width:1px;height:25px;background:#c8c8c8"></div><div class="a" style="left:1403px;top:865px;width:1px;height:25px;background:#c8c8c8"></div><div class="a" style="left:1547px;top:865px;width:1px;height:25px;background:#c8c8c8"></div><div class="a" style="left:1691px;top:865px;width:1px;height:25px;background:#c8c8c8"></div><svg class="a" style="left:24px;top:868px" width="20" height="21" viewBox="0 0 20 21"><path d="M2 1.5h8.5l4.5 4.5v11q0 .8-.8.8H2q-.8 0-.8-.8V2.3q0-.8.8-.8z" fill="url(#gdoc)" stroke="#6e6e6e" stroke-width="1.4"/><path d="M10.5 1.5v4.5h4.5z" fill="#555"/><circle cx="13.6" cy="14.8" r="4.3" fill="url(#gblue)"/></svg><div class="a" style="left:48px;top:869px;font-size:14.5px;line-height:18px;letter-spacing:-0.2px">13345671</div><div class="a" style="right:1457px;top:869px;font-size:14.5px;line-height:18px;letter-spacing:-0.35px">2017.06.19 14:34:59</div><div class="a" style="right:1327px;top:869px;font-size:14.5px;line-height:18px">buy</div><div class="a" style="right:1226px;top:869px;font-size:14.5px;line-height:18px">0.14</div><div class="a" style="right:1096px;top:869px;font-size:14.5px;line-height:18px">audnzd</div><div class="a" style="right:952px;top:869px;font-size:14.5px;line-height:18px">1.04938</div><div class="a" style="right:808px;top:869px;font-size:14.5px;line-height:18px">0.00000</div><div class="a" style="right:664px;top:869px;font-size:14.5px;line-height:18px">0.00000</div><div class="a" style="right:520px;top:869px;font-size:14.5px;line-height:18px">1.04563</div><div class="a" style="right:376px;top:869px;font-size:14.5px;line-height:18px">0.00</div><div class="a" style="right:232px;top:869px;font-size:14.5px;line-height:18px">-19.59</div><div class="a" style="right:36px;top:869px;font-size:14.5px;line-height:18px">-893.40</div><svg class="a" style="left:1895px;top:872px" width="13" height="13" viewBox="0 0 13 13"><path d="M1 1L12 12M12 1L1 12" stroke="#888" stroke-width="1.8"/></svg><div class="a" style="left:21px;top:890px;width:1894px;height:25px;background:#fff"></div><div class="a" style="left:21px;top:890px;width:1894px;height:1px;background:#c8c8c8"></div><div class="a" style="left:206px;top:890px;width:1px;height:25px;background:#c8c8c8"></div><div class="a" style="left:466px;top:890px;width:1px;height:25px;background:#c8c8c8"></div><div class="a" style="left:596px;top:890px;width:1px;height:25px;background:#c8c8c8"></div><div class="a" style="left:697px;top:890px;width:1px;height:25px;background:#c8c8c8"></div><div class="a" style="left:827px;top:890px;width:1px;height:25px;background:#c8c8c8"></div><div class="a" style="left:971px;top:890px;width:1px;height:25px;background:#c8c8c8"></div><div class="a" style="left:1115px;top:890px;width:1px;height:25px;background:#c8c8c8"></div><div class="a" style="left:1259px;top:890px;width:1px;height:25px;background:#c8c8c8"></div><div class="a" style="left:1403px;top:890px;width:1px;height:25px;background:#c8c8c8"></div><div class="a" style="left:1547px;top:890px;width:1px;height:25px;background:#c8c8c8"></div><div class="a" style="left:1691px;top:890px;width:1px;height:25px;background:#c8c8c8"></div><svg class="a" style="left:24px;top:893px" width="20" height="21" viewBox="0 0 20 21"><path d="M2 1.5h8.5l4.5 4.5v11q0 .8-.8.8H2q-.8 0-.8-.8V2.3q0-.8.8-.8z" fill="url(#gdoc)" stroke="#6e6e6e" stroke-width="1.4"/><path d="M10.5 1.5v4.5h4.5z" fill="#555"/><circle cx="13.6" cy="14.8" r="4.3" fill="url(#gred)"/></svg><div class="a" style="left:48px;top:894px;font-size:14.5px;line-height:18px;letter-spacing:-0.2px">13348050</div><div class="a" style="right:1457px;top:894px;font-size:14.5px;line-height:18px;letter-spacing:-0.35px">2017.06.20 09:02:12</div><div class="a" style="right:1327px;top:894px;font-size:14.5px;line-height:18px">sell</div><div class="a" style="right:1226px;top:894px;font-size:14.5px;line-height:18px">0.44</div><div class="a" style="right:1096px;top:894px;font-size:14.5px;line-height:18px">nzdusd.</div><div class="a" style="right:952px;top:894px;font-size:14.5px;line-height:18px">0.72560</div><div class="a" style="right:808px;top:894px;font-size:14.5px;line-height:18px">0.74044</div><div class="a" style="right:664px;top:894px;font-size:14.5px;line-height:18px">0.71999</div><div class="a" style="right:520px;top:894px;font-size:14.5px;line-height:18px">0.72232</div><div class="a" style="right:376px;top:894px;font-size:14.5px;line-height:18px">0.00</div><div class="a" style="right:232px;top:894px;font-size:14.5px;line-height:18px">-45.70</div><div class="a" style="right:36px;top:894px;font-size:14.5px;line-height:18px">3 405.80</div><svg class="a" style="left:1895px;top:897px" width="13" height="13" viewBox="0 0 13 13"><path d="M1 1L12 12M12 1L1 12" stroke="#888" stroke-width="1.8"/></svg><div class="a" style="left:21px;top:915px;width:1894px;height:25px;background:#ebebeb"></div><div class="a" style="left:21px;top:915px;width:1894px;height:1px;background:#c8c8c8"></div><div class="a" style="left:206px;top:915px;width:1px;height:25px;background:#c8c8c8"></div><div class="a" style="left:466px;top:915px;width:1px;height:25px;background:#c8c8c8"></div><div class="a" style="left:596px;top:915px;width:1px;height:25px;background:#c8c8c8"></div><div class="a" style="left:697px;top:915px;width:1px;height:25px;background:#c8c8c8"></div><div class="a" style="left:827px;top:915px;width:1px;height:25px;background:#c8c8c8"></div><div class="a" style="left:971px;top:915px;width:1px;height:25px;background:#c8c8c8"></div><div class="a" style="left:1115px;top:915px;width:1px;height:25px;background:#c8c8c8"></div><div class="a" style="left:1259px;top:915px;width:1px;height:25px;background:#c8c8c8"></div><div class="a" style="left:1403px;top:915px;width:1px;height:25px;background:#c8c8c8"></div><div class="a" style="left:1547px;top:915px;width:1px;height:25px;background:#c8c8c8"></div><div class="a" style="left:1691px;top:915px;width:1px;height:25px;background:#c8c8c8"></div><svg class="a" style="left:24px;top:918px" width="20" height="21" viewBox="0 0 20 21"><path d="M2 1.5h8.5l4.5 4.5v11q0 .8-.8.8H2q-.8 0-.8-.8V2.3q0-.8.8-.8z" fill="url(#gdoc)" stroke="#6e6e6e" stroke-width="1.4"/><path d="M10.5 1.5v4.5h4.5z" fill="#555"/><circle cx="13.6" cy="14.8" r="4.3" fill="url(#gred)"/></svg><div class="a" style="left:48px;top:919px;font-size:14.5px;line-height:18px;letter-spacing:-0.2px">13348055</div><div class="a" style="right:1457px;top:919px;font-size:14.5px;line-height:18px;letter-spacing:-0.35px">2017.06.20 09:03:36</div><div class="a" style="right:1327px;top:919px;font-size:14.5px;line-height:18px">sell</div><div class="a" style="right:1226px;top:919px;font-size:14.5px;line-height:18px">0.10</div><div class="a" style="right:1096px;top:919px;font-size:14.5px;line-height:18px">usdjpy.</div><div class="a" style="right:952px;top:919px;font-size:14.5px;line-height:18px">111.585</div><div class="a" style="right:808px;top:919px;font-size:14.5px;line-height:18px">113.452</div><div class="a" style="right:664px;top:919px;font-size:14.5px;line-height:18px">110.516</div><div class="a" style="right:520px;top:919px;font-size:14.5px;line-height:18px">111.717</div><div class="a" style="right:376px;top:919px;font-size:14.5px;line-height:18px">0.00</div><div class="a" style="right:232px;top:919px;font-size:14.5px;line-height:18px">-9.68</div><div class="a" style="right:36px;top:919px;font-size:14.5px;line-height:18px">-278.84</div><svg class="a" style="left:1895px;top:922px" width="13" height="13" viewBox="0 0 13 13"><path d="M1 1L12 12M12 1L1 12" stroke="#888" stroke-width="1.8"/></svg><div class="a" style="left:21px;top:940px;width:1894px;height:25px;background:#fff"></div><div class="a" style="left:21px;top:940px;width:1894px;height:1px;background:#c8c8c8"></div><div class="a" style="left:206px;top:940px;width:1px;height:25px;background:#c8c8c8"></div><div class="a" style="left:466px;top:940px;width:1px;height:25px;background:#c8c8c8"></div><div class="a" style="left:596px;top:940px;width:1px;height:25px;background:#c8c8c8"></div><div class="a" style="left:697px;top:940px;width:1px;height:25px;background:#c8c8c8"></div><div class="a" style="left:827px;top:940px;width:1px;height:25px;background:#c8c8c8"></div><div class="a" style="left:971px;top:940px;width:1px;height:25px;background:#c8c8c8"></div><div class="a" style="left:1115px;top:940px;width:1px;height:25px;background:#c8c8c8"></div><div class="a" style="left:1259px;top:940px;width:1px;height:25px;background:#c8c8c8"></div><div class="a" style="left:1403px;top:940px;width:1px;height:25px;background:#c8c8c8"></div><div class="a" style="left:1547px;top:940px;width:1px;height:25px;background:#c8c8c8"></div><div class="a" style="left:1691px;top:940px;width:1px;height:25px;background:#c8c8c8"></div><svg class="a" style="left:24px;top:943px" width="20" height="21" viewBox="0 0 20 21"><path d="M2 1.5h8.5l4.5 4.5v11q0 .8-.8.8H2q-.8 0-.8-.8V2.3q0-.8.8-.8z" fill="url(#gdoc)" stroke="#6e6e6e" stroke-width="1.4"/><path d="M10.5 1.5v4.5h4.5z" fill="#555"/><circle cx="13.6" cy="14.8" r="4.3" fill="url(#gblue)"/></svg><div class="a" style="left:48px;top:944px;font-size:14.5px;line-height:18px;letter-spacing:-0.2px">13352757</div><div class="a" style="right:1457px;top:944px;font-size:14.5px;line-height:18px;letter-spacing:-0.35px">2017.06.21 12:49:19</div><div class="a" style="right:1327px;top:944px;font-size:14.5px;line-height:18px">buy</div><div class="a" style="right:1226px;top:944px;font-size:14.5px;line-height:18px">0.33</div><div class="a" style="right:1096px;top:944px;font-size:14.5px;line-height:18px">audnzd</div><div class="a" style="right:952px;top:944px;font-size:14.5px;line-height:18px">1.04542</div><div class="a" style="right:808px;top:944px;font-size:14.5px;line-height:18px">0.00000</div><div class="a" style="right:664px;top:944px;font-size:14.5px;line-height:18px">0.00000</div><div class="a" style="right:520px;top:944px;font-size:14.5px;line-height:18px">1.04563</div><div class="a" style="right:376px;top:944px;font-size:14.5px;line-height:18px">0.00</div><div class="a" style="right:232px;top:944px;font-size:14.5px;line-height:18px">0.00</div><div class="a" style="right:36px;top:944px;font-size:14.5px;line-height:18px">117.93</div><svg class="a" style="left:1895px;top:947px" width="13" height="13" viewBox="0 0 13 13"><path d="M1 1L12 12M12 1L1 12" stroke="#888" stroke-width="1.8"/></svg><div class="a" style="left:21px;top:965px;width:1889px;height:25px;background:#c8c8c8"></div><svg class="a" style="left:24px;top:968px" width="18" height="20" viewBox="0 0 18 20"><rect x="1.5" y="1.5" width="14" height="15" fill="#fff" stroke="#888"/><path d="M8.5 4l-4.5 5h3v4h3v-4h3z" fill="#14a014"/></svg><div class="a" style="left:48px;top:969px;font-size:15px;line-height:18px"><b style="letter-spacing:0.1px">Zůstatek: 132 164.84 CZK&nbsp; Majetek: 159 774.04&nbsp; Marže: 21 057.04&nbsp; Dostupná marže: 138 717.00&nbsp; Výška marže: 758.77%</b></div><div class="a" style="right:36px;top:969px;font-size:15px;line-height:18px"><b>27 609.20</b></div><div class="a" style="left:1914px;top:464px;width:1px;height:502px;background:#c8c8c8"></div><div class="a" style="left:20px;top:1018px;width:1891px;height:1px;background:#000"></div><div class="a" style="left:23px;top:1018px;width:78px;height:25px;background:#fff;border:1px solid #000;border-top:none"></div><div class="a" style="left:36px;top:1023px;font-size:14.5px;line-height:18px">Obchod</div><div class="a" style="left:114px;top:1023px;font-size:14.5px;line-height:18px;color:#6d6d6d">Expozice</div><div class="a" style="left:198px;top:1023px;font-size:14.5px;line-height:18px;color:#6d6d6d">Historie účtu</div><div class="a" style="left:307px;top:1023px;font-size:14.5px;line-height:18px;color:#6d6d6d">Zprávy<span style="color:#e00;font-size:11px;position:relative;top:4px;padding-left:4px">99</span></div><div class="a" style="left:394px;top:1023px;font-size:14.5px;line-height:18px;color:#6d6d6d">Alarmy</div><div class="a" style="left:466px;top:1023px;font-size:14.5px;line-height:18px;color:#6d6d6d">Poštovní schránka<span style="color:#e00;font-size:11px;position:relative;top:4px;padding-left:5px">2</span></div><div class="a" style="left:618px;top:1023px;font-size:14.5px;line-height:18px;color:#6d6d6d">Obchod</div><div class="a" style="left:696px;top:1023px;font-size:14.5px;line-height:18px;color:#6d6d6d">Signály</div><div class="a" style="left:769px;top:1023px;font-size:14.5px;line-height:18px;color:#6d6d6d">Knihovna</div><div class="a" style="left:855px;top:1023px;font-size:14.5px;line-height:18px;color:#6d6d6d">Strategie</div><div class="a" style="left:940px;top:1023px;font-size:14.5px;line-height:18px;color:#6d6d6d">Deník</div><div class="a" style="left:185px;top:1022px;width:1px;height:18px;background:#555"></div><div class="a" style="left:294px;top:1022px;width:1px;height:18px;background:#555"></div><div class="a" style="left:381px;top:1022px;width:1px;height:18px;background:#555"></div><div class="a" style="left:453px;top:1022px;width:1px;height:18px;background:#555"></div><div class="a" style="left:605px;top:1022px;width:1px;height:18px;background:#555"></div><div class="a" style="left:683px;top:1022px;width:1px;height:18px;background:#555"></div><div class="a" style="left:756px;top:1022px;width:1px;height:18px;background:#555"></div><div class="a" style="left:842px;top:1022px;width:1px;height:18px;background:#555"></div><div class="a" style="left:926px;top:1022px;width:1px;height:18px;background:#555"></div><div class="a" style="left:990px;top:1022px;width:1px;height:18px;background:#555"></div><div class="a" style="left:0px;top:1049px;width:1920px;height:1px;background:#a0a0a0"></div><div class="a" style="left:0px;top:1050px;width:1920px;height:1px;background:#fff"></div><div class="a" style="left:0px;top:1051px;width:1920px;height:27px;background:#f0f0f0"></div><div class="a" style="left:3px;top:1058px;font-size:14.3px;line-height:18px">Pro pomoc, stiskněte F1</div><div class="a" style="left:1047px;top:1054px;width:1px;height:24px;background:#a0a0a0"></div><div class="a" style="left:1196px;top:1054px;width:1px;height:24px;background:#a0a0a0"></div><div class="a" style="left:1327px;top:1054px;width:1px;height:24px;background:#a0a0a0"></div><div class="a" style="left:1416px;top:1054px;width:1px;height:24px;background:#a0a0a0"></div><div class="a" style="left:1505px;top:1054px;width:1px;height:24px;background:#a0a0a0"></div><div class="a" style="left:1591px;top:1054px;width:1px;height:24px;background:#a0a0a0"></div><div class="a" style="left:1677px;top:1054px;width:1px;height:24px;background:#a0a0a0"></div><div class="a" style="left:1053px;top:1059px;font-size:15px;line-height:18px">Default</div><svg class="a" style="left:1766px;top:1059px" width="32" height="16" viewBox="0 0 32 16"><rect x="0" y="2" width="2" height="14" fill="#1a3a6a"/><rect x="0" y="2" width="2" height="7" fill="#5a8a1a"/><rect x="3" y="3" width="2" height="13" fill="#1a3a6a"/><rect x="3" y="3" width="2" height="7" fill="#5a8a1a"/><rect x="6" y="2" width="2" height="14" fill="#1a3a6a"/><rect x="6" y="2" width="2" height="7" fill="#5a8a1a"/><rect x="9" y="3" width="2" height="13" fill="#1a3a6a"/><rect x="9" y="3" width="2" height="7" fill="#5a8a1a"/><rect x="12" y="2" width="2" height="14" fill="#1a3a6a"/><rect x="12" y="2" width="2" height="7" fill="#5a8a1a"/><rect x="15" y="3" width="2" height="13" fill="#1a3a6a"/><rect x="15" y="3" width="2" height="7" fill="#5a8a1a"/><rect x="18" y="2" width="2" height="14" fill="#1a3a6a"/><rect x="18" y="2" width="2" height="7" fill="#5a8a1a"/><rect x="21" y="3" width="2" height="13" fill="#1a3a6a"/><rect x="21" y="3" width="2" height="0" fill="#5a8a1a"/><rect x="24" y="2" width="2" height="14" fill="#1a3a6a"/><rect x="24" y="2" width="2" height="0" fill="#5a8a1a"/><rect x="27" y="3" width="2" height="13" fill="#1a3a6a"/><rect x="27" y="3" width="2" height="0" fill="#5a8a1a"/><rect x="30" y="2" width="2" height="14" fill="#1a3a6a"/><rect x="30" y="2" width="2" height="0" fill="#5a8a1a"/></svg><div class="a" style="left:1803px;top:1059px;font-size:15px;line-height:18px">7846/4 kb</div><div class="a" style="left:0px;top:1078px;width:1920px;height:2px;background:#1a1a1a"></div></body></html>
